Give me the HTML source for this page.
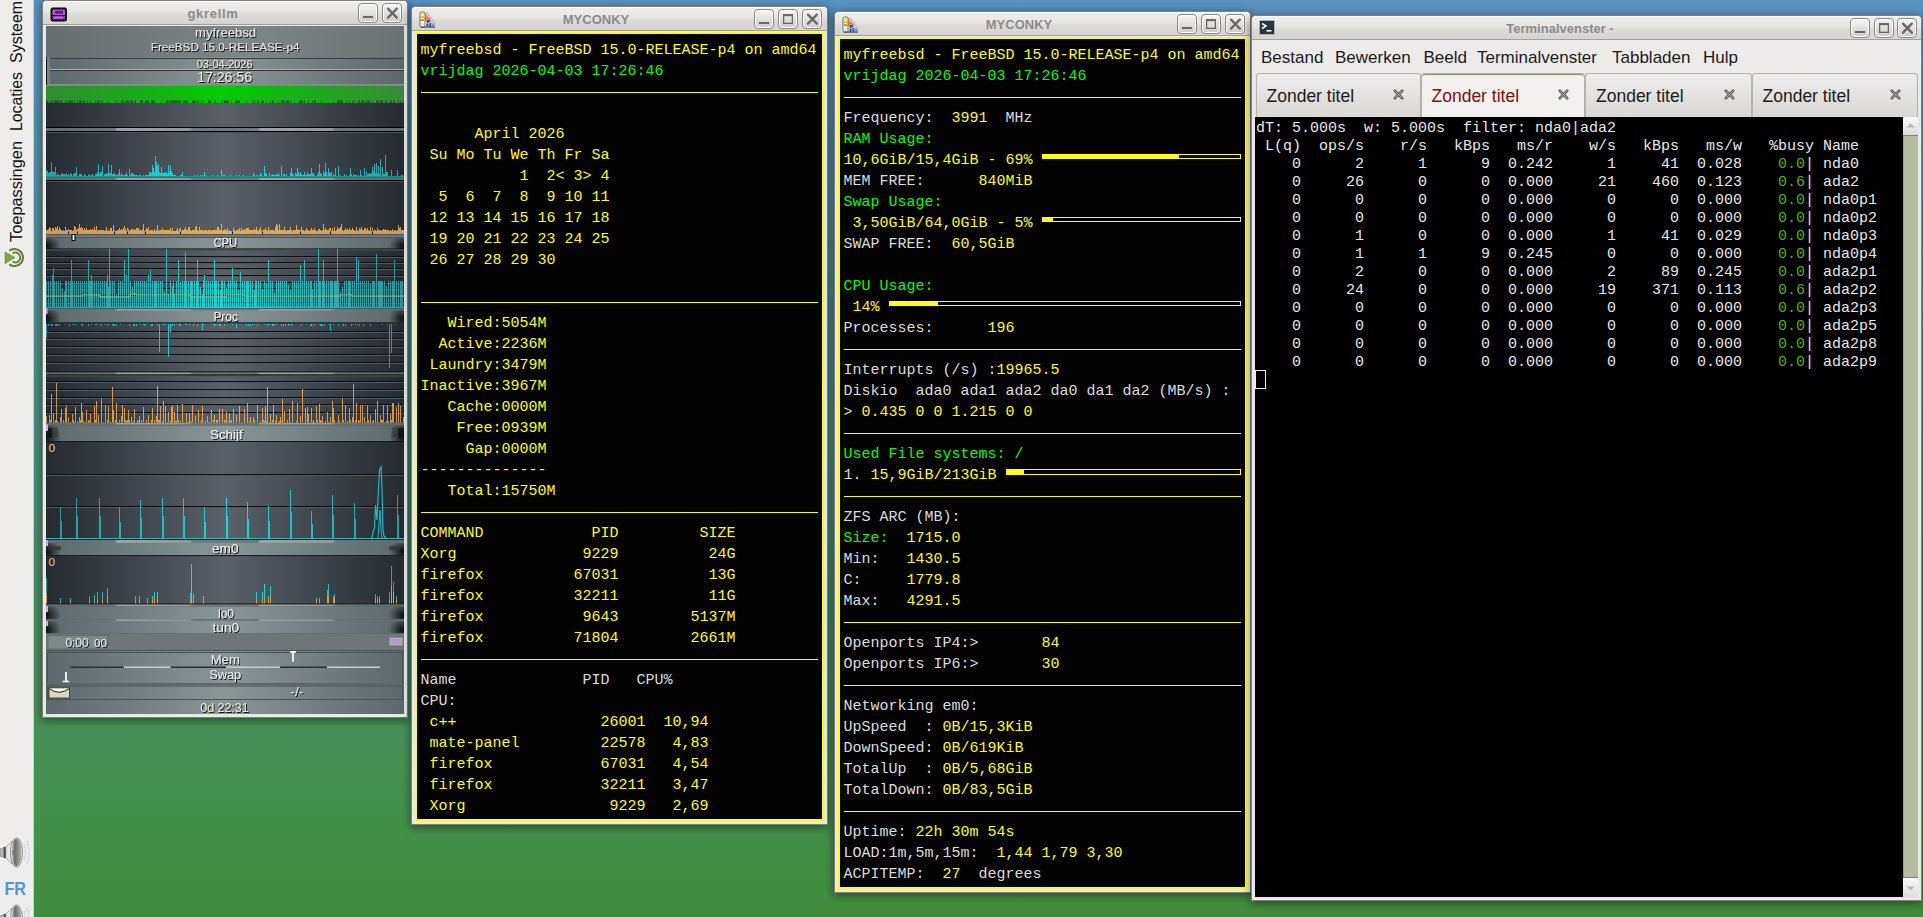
<!DOCTYPE html><html><head><meta charset="utf-8"><style>
*{box-sizing:border-box}
html,body{margin:0;padding:0}
body{width:1923px;height:917px;position:relative;overflow:hidden;
 background:linear-gradient(180deg,rgb(90,145,192) 0px,rgb(78,142,165) 150px,rgb(72,140,128) 390px,rgb(69,141,100) 590px,rgb(70,143,86) 730px,rgb(67,144,75) 810px,rgb(65,140,60) 917px);
 font-family:"Liberation Sans",sans-serif}
.abs{position:absolute}
#panel{position:absolute;left:0;top:0;width:34px;height:917px;background:#eeedeb;border-right:1px solid #d6cfcf}
.win{position:absolute;background:#ebe9e6;border:1px solid #827e7a;border-radius:5px 5px 0 0;box-shadow:0 2px 9px 1px rgba(0,0,0,.42)}
.tb{position:absolute;left:0;top:0;right:0;height:24px;background:linear-gradient(#efeeec 0%,#e7e5e2 48%,#dddbd7 56%,#d6d4d0 100%);border-bottom:1px solid #a39f9b;border-radius:4px 4px 0 0;box-shadow:inset 0 1px 0 #fff}
.tt{position:absolute;left:0;right:0;top:5px;height:23px;line-height:23px;text-align:center;font:bold 13px "Liberation Sans",sans-serif;color:#8b8b8b}
.btn{position:absolute;top:2px;width:20px;height:20px;border:1px solid #8c8884;border-radius:4px;background:linear-gradient(#f7f6f5,#e2e0dc 50%,#cfccc7);box-shadow:inset 0 0 0 1px #fff}
.btn svg{position:absolute;left:0;top:0}
.mono{font-family:"Liberation Mono",monospace;white-space:pre}

.cl{font-size:15px;line-height:21px;height:21px}
.tl{font-size:15px;line-height:18px;height:18px;color:#e8e8e8}
.menu{font-size:17px;line-height:20px;color:#1a1a1a;white-space:pre}
.tab{background:linear-gradient(#eeedeb,#d9d7d3);border:1px solid #b5b2ad;border-bottom:none;border-radius:4px 4px 0 0}
.tab.act{background:#f2f1f0;border-color:#b5b2ad;box-shadow:inset 0 2px 1px -1px #7a8a5a}
.tabt{position:absolute;left:10px;font-size:17.5px;line-height:20px;color:#1a1a1a;white-space:pre}
.tab.act .tabt{color:#7a1010}
.tabx{position:absolute}
</style></head><body><div id="panel"><svg width="34" height="917" style="position:absolute;left:0;top:0" font-family="Liberation Sans"><text transform="translate(22.3,242) rotate(-90)" font-size="17" textLength="101" lengthAdjust="spacingAndGlyphs" fill="#101010">Toepassingen</text><text transform="translate(22.3,131) rotate(-90)" font-size="17" textLength="59" lengthAdjust="spacingAndGlyphs" fill="#101010">Locaties</text><text transform="translate(22.3,62.9) rotate(-90)" font-size="17" textLength="62" lengthAdjust="spacingAndGlyphs" fill="#101010">Systeem</text><path d="M5 251.9 L5 263.7 L15 257.6 Z" fill="#7aa84a" stroke="#5a7a38" stroke-width="0.5"/><path d="M9.3 250.6 A8.6 8.6 0 1 1 9.3 264.4" fill="none" stroke="#5d7f3a" stroke-width="2"/><path d="M12.6 253.4 A4.9 4.9 0 1 1 12.6 261.6" fill="none" stroke="#5d7f3a" stroke-width="1.8"/><g transform="translate(0,838)"><defs><linearGradient id="spk" x1="0" x2="1"><stop offset="0" stop-color="#e8e8e8"/><stop offset="0.35" stop-color="#6a6a6a"/><stop offset="1" stop-color="#b8b8b8"/></linearGradient></defs><path d="M0 11 L6 9 L6 20 L0 18 Z" fill="#b8b8b8" stroke="#777" stroke-width="0.6"/><rect x="3.5" y="9" width="3" height="11" fill="#555"/><path d="M6 9 L12 3 L12 26 L6 20 Z" fill="#e8e8e8" stroke="#888" stroke-width="0.6"/><ellipse cx="16.5" cy="14.5" rx="5.5" ry="14.2" fill="url(#spk)" stroke="#eee" stroke-width="0.9"/><ellipse cx="16.5" cy="14.5" rx="6" ry="14.7" fill="none" stroke="#555" stroke-width="0.6"/><ellipse cx="13.5" cy="14.5" rx="1.5" ry="2.5" fill="#777"/><path d="M24 6 Q27 14.5 24 23 M27 3 Q31 14.5 27 26" fill="none" stroke="#8ab8e8" stroke-width="0.8" stroke-dasharray="1.5 1"/></g><text x="4.5" y="894.5" font-size="19" font-weight="bold" textLength="21.5" lengthAdjust="spacingAndGlyphs" fill="#4a9ad8">FR</text><g transform="translate(0,905)"><defs><linearGradient id="spk" x1="0" x2="1"><stop offset="0" stop-color="#e8e8e8"/><stop offset="0.35" stop-color="#6a6a6a"/><stop offset="1" stop-color="#b8b8b8"/></linearGradient></defs><path d="M0 11 L6 9 L6 20 L0 18 Z" fill="#b8b8b8" stroke="#777" stroke-width="0.6"/><rect x="3.5" y="9" width="3" height="11" fill="#555"/><path d="M6 9 L12 3 L12 26 L6 20 Z" fill="#e8e8e8" stroke="#888" stroke-width="0.6"/><ellipse cx="16.5" cy="14.5" rx="5.5" ry="14.2" fill="url(#spk)" stroke="#eee" stroke-width="0.9"/><ellipse cx="16.5" cy="14.5" rx="6" ry="14.7" fill="none" stroke="#555" stroke-width="0.6"/><ellipse cx="13.5" cy="14.5" rx="1.5" ry="2.5" fill="#777"/><path d="M24 6 Q27 14.5 24 23 M27 3 Q31 14.5 27 26" fill="none" stroke="#8ab8e8" stroke-width="0.8" stroke-dasharray="1.5 1"/></g></svg></div><div class="win" style="left:42px;top:0px;width:366px;height:718px"><div class="tb"></div><div class="tt" style="left:26px;width:288px;right:auto;letter-spacing:0.7px;">gkrellm</div><svg class="abs" style="left:7px;top:6px" width="17" height="15" viewBox="0 0 17 15"><rect x="1" y="1" width="15.5" height="13" rx="1.5" fill="#1a0a20" stroke="#000" stroke-width="1"/><rect x="2.5" y="2.5" width="12.5" height="5.5" fill="#b060d0"/><rect x="5" y="3.8" width="8" height="3" fill="#6a1a8a"/><rect x="2.5" y="9" width="12.5" height="3.5" fill="#8a30b0"/><rect x="4" y="9.8" width="9" height="1.6" fill="#d8a0f0" opacity=".7"/></svg><div class="btn" style="left:315px;top:2px"><svg width="18" height="18"><rect x="4" y="12" width="10" height="2" fill="#686868"/></svg></div><div class="btn" style="left:339px;top:2px"><svg width="18" height="18"><path d="M5 4.6 L13.8 13.6 M13.8 4.6 L5 13.6" stroke="#686868" stroke-width="2.3" stroke-linecap="round"/></svg></div><div class="abs" style="left:3px;top:25px;width:358px;height:688px;background:#4a5258;overflow:hidden"><svg width="358" height="688" style="position:absolute;left:0;top:0" font-family="Liberation Sans"><defs><linearGradient id="cbg" x1="0" x2="1" y1="0" y2="0"><stop offset="0" stop-color="#252a31"/><stop offset="0.5" stop-color="#5a6168"/><stop offset="1" stop-color="#252a31"/></linearGradient><linearGradient id="pbg" x1="0" x2="1" y1="0" y2="0"><stop offset="0" stop-color="#5c686b"/><stop offset="0.5" stop-color="#8a9598"/><stop offset="1" stop-color="#5c686b"/></linearGradient><linearGradient id="hbg" x1="0" x2="1" y1="0" y2="0"><stop offset="0" stop-color="#666e70"/><stop offset="0.55" stop-color="#7e8688"/><stop offset="1" stop-color="#6a7274"/></linearGradient><linearGradient id="grn" x1="0" x2="1" y1="0" y2="0"><stop offset="0" stop-color="#348a34"/><stop offset="0.5" stop-color="#00cc00"/><stop offset="1" stop-color="#3a8a3a"/></linearGradient><linearGradient id="sep" x1="0" x2="1" y1="0" y2="0"><stop offset="0" stop-color="#5f6b6e"/><stop offset="0.19" stop-color="#6a7679"/><stop offset="0.2" stop-color="#9aa4a6"/><stop offset="0.4" stop-color="#8e9899"/><stop offset="0.41" stop-color="#6e7a7c"/><stop offset="0.59" stop-color="#6e7a7c"/><stop offset="0.6" stop-color="#9aa4a6"/><stop offset="0.8" stop-color="#8e9899"/><stop offset="0.81" stop-color="#6a7679"/><stop offset="1" stop-color="#5f6b6e"/></linearGradient><radialGradient id="blobL" cx="0" cy="0.7" r="1" gradientTransform="scale(0.25 1)"><stop offset="0" stop-color="#000" stop-opacity="0.9"/><stop offset="1" stop-color="#000" stop-opacity="0"/></radialGradient><radialGradient id="blobR" cx="1" cy="0.7" r="1" gradientTransform="translate(0.75 0) scale(0.25 1)"><stop offset="0" stop-color="#000" stop-opacity="0.9"/><stop offset="1" stop-color="#000" stop-opacity="0"/></radialGradient><linearGradient id="cyan" x1="0" x2="1" y1="0" y2="0"><stop offset="0" stop-color="#2aa0a4"/><stop offset="0.5" stop-color="#12e2e2"/><stop offset="1" stop-color="#2aa0a4"/></linearGradient><linearGradient id="org" x1="0" x2="1" y1="0" y2="0"><stop offset="0" stop-color="#d49a48"/><stop offset="0.5" stop-color="#f0a848"/><stop offset="1" stop-color="#d49a48"/></linearGradient><filter id="sh" x="-10%" y="-30%" width="130%" height="160%"><feDropShadow dx="1" dy="1" stdDeviation="0.3" flood-color="#000" flood-opacity="0.85"/></filter></defs><rect x="0" y="0" width="358" height="31" fill="url(#hbg)" /><text x="149" y="11.299999999999997" font-size="12.8" textLength="61" lengthAdjust="spacingAndGlyphs" fill="#e4e4e4" font-weight="normal" filter="url(#sh)">myfreebsd</text><text x="104.80000000000001" y="24.700000000000003" font-size="11.6" textLength="148.7" lengthAdjust="spacingAndGlyphs" fill="#e4e4e4" font-weight="normal" filter="url(#sh)">FreeBSD 15.0-RELEASE-p4</text><rect x="0" y="31" width="358" height="28" fill="url(#pbg)" /><rect x="0" y="31" width="1" height="28" fill="#101214" /><rect x="1" y="31" width="3" height="27" fill="#7a7f80" /><rect x="4" y="32" width="354" height="1" fill="#3a4042" /><rect x="4" y="43" width="354" height="1" fill="#a8aeb0" /><rect x="4" y="44" width="354" height="1" fill="#33393b" /><rect x="1" y="58" width="357" height="1" fill="#8a8c90" /><text x="150.7" y="41.5" font-size="11.3" textLength="55.80000000000001" lengthAdjust="spacingAndGlyphs" fill="#efe6cc" font-weight="normal" filter="url(#sh)">03-04-2026</text><text x="151.2" y="56.3" font-size="14.2" textLength="54.80000000000001" lengthAdjust="spacingAndGlyphs" fill="#efe6cc" font-weight="normal" filter="url(#sh)">17:26:56</text><rect x="0" y="59" width="358" height="18" fill="url(#grn)" /><rect x="0" y="59" width="358" height="1" fill="#2ec42e" opacity="0.85"/><path d="M0 74.5h1v2.5h-1zM1 74.5h1v2.5h-1zM3 74.5h1v2.5h-1zM5 74.5h1v2.5h-1zM6 74.5h1v2.5h-1zM8 74.5h1v2.5h-1zM9 74.5h1v2.5h-1zM10 74.5h1v2.5h-1zM11 74.5h1v2.5h-1zM12 74.5h1v2.5h-1zM14 74.5h1v2.5h-1zM15 74.5h1v2.5h-1zM19 74.5h1v2.5h-1zM21 74.5h1v2.5h-1zM23 74.5h1v2.5h-1zM24 74.5h1v2.5h-1zM25 74.5h1v2.5h-1zM26 74.5h1v2.5h-1zM28 74.5h1v2.5h-1zM31 74.5h1v2.5h-1zM33 74.5h1v2.5h-1zM34 74.5h1v2.5h-1zM35 74.5h1v2.5h-1zM37 74.5h1v2.5h-1zM38 74.5h1v2.5h-1zM41 74.5h1v2.5h-1zM44 74.5h1v2.5h-1zM49 74.5h1v2.5h-1zM51 74.5h1v2.5h-1zM52 74.5h1v2.5h-1zM54 74.5h1v2.5h-1zM56 74.5h1v2.5h-1zM61 74.5h1v2.5h-1zM70 74.5h1v2.5h-1zM75 74.5h1v2.5h-1zM76 74.5h1v2.5h-1zM78 74.5h1v2.5h-1zM80 74.5h1v2.5h-1zM81 74.5h1v2.5h-1zM82 74.5h1v2.5h-1zM84 74.5h1v2.5h-1zM85 74.5h1v2.5h-1zM86 74.5h1v2.5h-1zM88 74.5h1v2.5h-1zM89 74.5h1v2.5h-1zM94 74.5h1v2.5h-1zM95 74.5h1v2.5h-1zM96 74.5h1v2.5h-1zM99 74.5h1v2.5h-1zM100 74.5h1v2.5h-1zM101 74.5h1v2.5h-1zM102 74.5h1v2.5h-1zM105 74.5h1v2.5h-1zM106 74.5h1v2.5h-1zM107 74.5h1v2.5h-1zM108 74.5h1v2.5h-1zM115 74.5h1v2.5h-1zM120 74.5h1v2.5h-1zM121 74.5h1v2.5h-1zM122 74.5h1v2.5h-1zM124 74.5h1v2.5h-1zM125 74.5h1v2.5h-1zM126 74.5h1v2.5h-1zM127 74.5h1v2.5h-1zM128 74.5h1v2.5h-1zM129 74.5h1v2.5h-1zM130 74.5h1v2.5h-1zM131 74.5h1v2.5h-1zM132 74.5h1v2.5h-1zM133 74.5h1v2.5h-1zM134 74.5h1v2.5h-1zM137 74.5h1v2.5h-1zM138 74.5h1v2.5h-1zM139 74.5h1v2.5h-1zM140 74.5h1v2.5h-1zM141 74.5h1v2.5h-1zM146 74.5h1v2.5h-1zM147 74.5h1v2.5h-1zM148 74.5h1v2.5h-1zM149 74.5h1v2.5h-1zM151 74.5h1v2.5h-1zM152 74.5h1v2.5h-1zM155 74.5h1v2.5h-1zM157 74.5h1v2.5h-1zM162 74.5h1v2.5h-1zM163 74.5h1v2.5h-1zM164 74.5h1v2.5h-1zM168 74.5h1v2.5h-1zM169 74.5h1v2.5h-1zM176 74.5h1v2.5h-1zM178 74.5h1v2.5h-1zM179 74.5h1v2.5h-1zM180 74.5h1v2.5h-1zM181 74.5h1v2.5h-1zM182 74.5h1v2.5h-1zM185 74.5h1v2.5h-1zM189 74.5h1v2.5h-1zM190 74.5h1v2.5h-1zM191 74.5h1v2.5h-1zM192 74.5h1v2.5h-1zM193 74.5h1v2.5h-1zM200 74.5h1v2.5h-1zM206 74.5h1v2.5h-1zM208 74.5h1v2.5h-1zM211 74.5h1v2.5h-1zM212 74.5h1v2.5h-1zM215 74.5h1v2.5h-1zM216 74.5h1v2.5h-1zM217 74.5h1v2.5h-1zM220 74.5h1v2.5h-1zM224 74.5h1v2.5h-1zM226 74.5h1v2.5h-1zM227 74.5h1v2.5h-1zM232 74.5h1v2.5h-1zM235 74.5h1v2.5h-1zM236 74.5h1v2.5h-1zM237 74.5h1v2.5h-1zM238 74.5h1v2.5h-1zM240 74.5h1v2.5h-1zM241 74.5h1v2.5h-1zM242 74.5h1v2.5h-1zM244 74.5h1v2.5h-1zM248 74.5h1v2.5h-1zM253 74.5h1v2.5h-1zM254 74.5h1v2.5h-1zM255 74.5h1v2.5h-1zM256 74.5h1v2.5h-1zM258 74.5h1v2.5h-1zM262 74.5h1v2.5h-1zM266 74.5h1v2.5h-1zM268 74.5h1v2.5h-1zM269 74.5h1v2.5h-1zM275 74.5h1v2.5h-1zM287 74.5h1v2.5h-1zM291 74.5h1v2.5h-1zM292 74.5h1v2.5h-1zM293 74.5h1v2.5h-1zM294 74.5h1v2.5h-1zM295 74.5h1v2.5h-1zM296 74.5h1v2.5h-1zM300 74.5h1v2.5h-1zM303 74.5h1v2.5h-1zM306 74.5h1v2.5h-1zM308 74.5h1v2.5h-1zM312 74.5h1v2.5h-1zM313 74.5h1v2.5h-1zM315 74.5h1v2.5h-1zM316 74.5h1v2.5h-1zM317 74.5h1v2.5h-1zM319 74.5h1v2.5h-1zM321 74.5h1v2.5h-1zM322 74.5h1v2.5h-1zM323 74.5h1v2.5h-1zM326 74.5h1v2.5h-1zM330 74.5h1v2.5h-1zM331 74.5h1v2.5h-1zM332 74.5h1v2.5h-1zM334 74.5h1v2.5h-1zM335 74.5h1v2.5h-1zM336 74.5h1v2.5h-1zM339 74.5h1v2.5h-1zM340 74.5h1v2.5h-1zM344 74.5h1v2.5h-1zM345 74.5h1v2.5h-1zM347 74.5h1v2.5h-1zM348 74.5h1v2.5h-1zM352 74.5h1v2.5h-1zM354 74.5h1v2.5h-1zM357 74.5h1v2.5h-1z" fill="#2a3a30" opacity="0.7"/><rect x="0" y="77" width="358" height="24" fill="url(#cbg)" /><rect x="0" y="101" width="358" height="1" fill="#000" /><rect x="0" y="102" width="358" height="3" fill="url(#sep)" /><rect x="0" y="105" width="358" height="1" fill="#000" /><rect x="0" y="106" width="358" height="1" fill="#46515b" /><rect x="0" y="107" width="358" height="44" fill="url(#cbg)" /><path d="M0 151v-7h1v7zM1 151v-6h1v6zM2 151v-4h1v4zM3 151v-5h1v5zM4 151v-5h1v5zM5 151v-15h1v15zM6 151v-6h1v6zM7 151v-5h1v5zM8 151v-5h1v5zM9 151v-10h1v10zM10 151v-2h1v2zM11 151v-4h1v4zM12 151v-2h1v2zM13 151v-2h1v2zM14 151v-2h1v2zM15 151v-4h1v4zM16 151v-3h1v3zM17 151v-3h1v3zM18 151v-3h1v3zM19 151v-2h1v2zM20 151v-4h1v4zM21 151v-2h1v2zM22 151v-3h1v3zM24 151v-4h1v4zM25 151v-3h1v3zM27 151v-3h1v3zM28 151v-4h1v4zM29 151v-4h1v4zM30 151v-10h1v10zM32 151v-1h1v1zM33 151v-3h1v3zM34 151v-3h1v3zM35 151v-3h1v3zM37 151v-1h1v1zM38 151v-3h1v3zM39 151v-2h1v2zM42 151v-2h1v2zM43 151v-3h1v3zM45 151v-2h1v2zM46 151v-3h1v3zM47 151v-1h1v1zM49 151v-3h1v3zM50 151v-3h1v3zM51 151v-5h1v5zM52 151v-13h1v13zM53 151v-3h1v3zM54 151v-5h1v5zM55 151v-5h1v5zM56 151v-11h1v11zM57 151v-1h1v1zM58 151v-3h1v3zM59 151v-3h1v3zM60 151v-4h1v4zM61 151v-3h1v3zM62 151v-13h1v13zM63 151v-4h1v4zM64 151v-4h1v4zM65 151v-12h1v12zM66 151v-3h1v3zM67 151v-3h1v3zM68 151v-4h1v4zM69 151v-2h1v2zM70 151v-2h1v2zM71 151v-2h1v2zM72 151v-4h1v4zM73 151v-8h1v8zM74 151v-2h1v2zM75 151v-4h1v4zM76 151v-2h1v2zM77 151v-2h1v2zM78 151v-2h1v2zM79 151v-3h1v3zM80 151v-4h1v4zM81 151v-2h1v2zM82 151v-1h1v1zM83 151v-8h1v8zM84 151v-2h1v2zM85 151v-4h1v4zM86 151v-4h1v4zM87 151v-3h1v3zM88 151v-2h1v2zM89 151v-2h1v2zM90 151v-2h1v2zM91 151v-2h1v2zM92 151v-1h1v1zM93 151v-2h1v2zM94 151v-2h1v2zM97 151v-2h1v2zM98 151v-1h1v1zM99 151v-2h1v2zM100 151v-2h1v2zM101 151v-2h1v2zM102 151v-2h1v2zM103 151v-5h1v5zM104 151v-5h1v5zM105 151v-4h1v4zM106 151v-12h1v12zM107 151v-9h1v9zM108 151v-5h1v5zM109 151v-21h1v21zM110 151v-15h1v15zM111 151v-11h1v11zM112 151v-13h1v13zM113 151v-5h1v5zM114 151v-4h1v4zM115 151v-10h1v10zM116 151v-4h1v4zM117 151v-4h1v4zM118 151v-5h1v5zM119 151v-4h1v4zM120 151v-5h1v5zM121 151v-3h1v3zM122 151v-12h1v12zM123 151v-5h1v5zM124 151v-12h1v12zM125 151v-6h1v6zM126 151v-4h1v4zM127 151v-2h1v2zM128 151v-2h1v2zM129 151v-2h1v2zM132 151v-1h1v1zM133 151v-1h1v1zM134 151v-2h1v2zM135 151v-2h1v2zM136 151v-5h1v5zM137 151v-1h1v1zM141 151v-1h1v1zM142 151v-1h1v1zM143 151v-1h1v1zM148 151v-2h1v2zM150 151v-1h1v1zM151 151v-2h1v2zM152 151v-1h1v1zM154 151v-2h1v2zM156 151v-2h1v2zM158 151v-5h1v5zM159 151v-2h1v2zM160 151v-1h1v1zM162 151v-1h1v1zM163 151v-1h1v1zM165 151v-1h1v1zM166 151v-2h1v2zM167 151v-1h1v1zM171 151v-2h1v2zM175 151v-7h1v7zM176 151v-1h1v1zM177 151v-2h1v2zM178 151v-2h1v2zM180 151v-1h1v1zM182 151v-1h1v1zM184 151v-2h1v2zM185 151v-1h1v1zM186 151v-1h1v1zM190 151v-2h1v2zM192 151v-1h1v1zM193 151v-2h1v2zM194 151v-1h1v1zM195 151v-1h1v1zM197 151v-2h1v2zM198 151v-1h1v1zM200 151v-1h1v1zM202 151v-1h1v1zM203 151v-1h1v1zM207 151v-4h1v4zM208 151v-2h1v2zM209 151v-1h1v1zM210 151v-2h1v2zM211 151v-1h1v1zM212 151v-2h1v2zM214 151v-4h1v4zM215 151v-3h1v3zM216 151v-1h1v1zM217 151v-1h1v1zM218 151v-11h1v11zM219 151v-4h1v4zM220 151v-3h1v3zM222 151v-1h1v1zM223 151v-4h1v4zM224 151v-1h1v1zM225 151v-2h1v2zM226 151v-3h1v3zM227 151v-2h1v2zM228 151v-2h1v2zM229 151v-2h1v2zM230 151v-3h1v3zM231 151v-2h1v2zM232 151v-4h1v4zM233 151v-2h1v2zM234 151v-1h1v1zM235 151v-11h1v11zM236 151v-1h1v1zM237 151v-3h1v3zM238 151v-3h1v3zM239 151v-1h1v1zM240 151v-3h1v3zM241 151v-1h1v1zM244 151v-4h1v4zM245 151v-9h1v9zM246 151v-4h1v4zM247 151v-2h1v2zM248 151v-1h1v1zM249 151v-4h1v4zM250 151v-3h1v3zM251 151v-9h1v9zM252 151v-5h1v5zM253 151v-2h1v2zM254 151v-5h1v5zM255 151v-3h1v3zM256 151v-2h1v2zM257 151v-2h1v2zM258 151v-5h1v5zM259 151v-2h1v2zM260 151v-2h1v2zM261 151v-5h1v5zM262 151v-3h1v3zM263 151v-3h1v3zM264 151v-3h1v3zM265 151v-9h1v9zM266 151v-4h1v4zM267 151v-4h1v4zM268 151v-2h1v2zM269 151v-1h1v1zM270 151v-1h1v1zM271 151v-3h1v3zM272 151v-5h1v5zM273 151v-13h1v13zM274 151v-4h1v4zM275 151v-3h1v3zM276 151v-1h1v1zM277 151v-6h1v6zM278 151v-4h1v4zM279 151v-14h1v14zM280 151v-5h1v5zM281 151v-1h1v1zM282 151v-9h1v9zM283 151v-5h1v5zM284 151v-4h1v4zM285 151v-5h1v5zM286 151v-1h1v1zM287 151v-3h1v3zM288 151v-2h1v2zM289 151v-9h1v9zM290 151v-1h1v1zM292 151v-11h1v11zM293 151v-1h1v1zM294 151v-2h1v2zM297 151v-1h1v1zM298 151v-3h1v3zM300 151v-2h1v2zM301 151v-1h1v1zM302 151v-1h1v1zM303 151v-2h1v2zM304 151v-9h1v9zM305 151v-3h1v3zM306 151v-1h1v1zM307 151v-3h1v3zM308 151v-2h1v2zM309 151v-2h1v2zM310 151v-2h1v2zM311 151v-1h1v1zM312 151v-2h1v2zM314 151v-7h1v7zM315 151v-2h1v2zM317 151v-1h1v1zM318 151v-9h1v9zM320 151v-5h1v5zM321 151v-2h1v2zM322 151v-3h1v3zM323 151v-4h1v4zM324 151v-3h1v3zM325 151v-4h1v4zM326 151v-10h1v10zM327 151v-6h1v6zM328 151v-13h1v13zM329 151v-4h1v4zM330 151v-14h1v14zM331 151v-4h1v4zM332 151v-11h1v11zM333 151v-3h1v3zM334 151v-18h1v18zM335 151v-1h1v1zM336 151v-10h1v10zM337 151v-3h1v3zM338 151v-3h1v3zM339 151v-22h1v22zM340 151v-5h1v5zM341 151v-5h1v5zM342 151v-1h1v1zM343 151v-1h1v1zM345 151v-7h1v7zM346 151v-1h1v1zM347 151v-1h1v1zM348 151v-1h1v1zM349 151v-1h1v1zM351 151v-7h1v7zM352 151v-1h1v1zM355 151v-2h1v2zM356 151v-2h1v2z" fill="url(#cyan)" opacity="1" shape-rendering="crispEdges"/><rect x="0" y="150" width="358" height="1" fill="#00a0a0" /><rect x="0" y="151" width="358" height="1" fill="#5a5a6a" /><rect x="0" y="152" width="358" height="2" fill="url(#sep)" /><rect x="0" y="154" width="358" height="1" fill="#000" /><rect x="0" y="155" width="358" height="1" fill="#46515b" /><rect x="0" y="156" width="358" height="52" fill="url(#cbg)" /><path d="M0 208v-4h1v4zM1 208v-4h1v4zM2 208v-5h1v5zM3 208v-7h1v7zM4 208v-6h1v6zM5 208v-3h1v3zM6 208v-6h1v6zM7 208v-6h1v6zM8 208v-4h1v4zM9 208v-7h1v7zM10 208v-6h1v6zM11 208v-8h1v8zM12 208v-4h1v4zM13 208v-7h1v7zM14 208v-5h1v5zM15 208v-4h1v4zM16 208v-3h1v3zM17 208v-4h1v4zM18 208v-3h1v3zM19 208v-7h1v7zM20 208v-4h1v4zM21 208v-4h1v4zM22 208v-5h1v5zM23 208v-4h1v4zM24 208v-4h1v4zM25 208v-4h1v4zM26 208v-3h1v3zM27 208v-4h1v4zM28 208v-8h1v8zM29 208v-7h1v7zM30 208v-4h1v4zM31 208v-5h1v5zM32 208v-6h1v6zM33 208v-10h1v10zM34 208v-6h1v6zM35 208v-7h1v7zM36 208v-6h1v6zM37 208v-4h1v4zM38 208v-6h1v6zM39 208v-4h1v4zM40 208v-6h1v6zM41 208v-4h1v4zM42 208v-4h1v4zM43 208v-4h1v4zM44 208v-5h1v5zM45 208v-4h1v4zM46 208v-5h1v5zM47 208v-4h1v4zM48 208v-7h1v7zM49 208v-4h1v4zM50 208v-8h1v8zM51 208v-3h1v3zM52 208v-4h1v4zM53 208v-4h1v4zM54 208v-4h1v4zM55 208v-4h1v4zM56 208v-4h1v4zM57 208v-4h1v4zM58 208v-3h1v3zM59 208v-4h1v4zM60 208v-7h1v7zM61 208v-3h1v3zM62 208v-4h1v4zM63 208v-3h1v3zM64 208v-6h1v6zM65 208v-6h1v6zM66 208v-3h1v3zM67 208v-9h1v9zM68 208v-4h1v4zM69 208v-3h1v3zM70 208v-3h1v3zM71 208v-4h1v4zM72 208v-4h1v4zM73 208v-6h1v6zM74 208v-4h1v4zM75 208v-5h1v5zM76 208v-4h1v4zM77 208v-6h1v6zM78 208v-8h1v8zM79 208v-5h1v5zM80 208v-3h1v3zM81 208v-6h1v6zM82 208v-5h1v5zM83 208v-3h1v3zM84 208v-4h1v4zM85 208v-5h1v5zM86 208v-5h1v5zM87 208v-4h1v4zM88 208v-5h1v5zM89 208v-4h1v4zM90 208v-6h1v6zM91 208v-6h1v6zM92 208v-6h1v6zM93 208v-4h1v4zM94 208v-4h1v4zM95 208v-3h1v3zM96 208v-5h1v5zM97 208v-10h1v10zM98 208v-3h1v3zM99 208v-4h1v4zM100 208v-6h1v6zM101 208v-5h1v5zM102 208v-7h1v7zM103 208v-3h1v3zM104 208v-4h1v4zM105 208v-4h1v4zM106 208v-4h1v4zM107 208v-3h1v3zM108 208v-5h1v5zM109 208v-3h1v3zM110 208v-4h1v4zM111 208v-9h1v9zM112 208v-3h1v3zM113 208v-4h1v4zM114 208v-4h1v4zM115 208v-4h1v4zM116 208v-6h1v6zM117 208v-4h1v4zM118 208v-4h1v4zM119 208v-4h1v4zM120 208v-4h1v4zM121 208v-4h1v4zM122 208v-4h1v4zM123 208v-4h1v4zM124 208v-6h1v6zM125 208v-3h1v3zM126 208v-6h1v6zM127 208v-3h1v3zM128 208v-3h1v3zM129 208v-3h1v3zM130 208v-4h1v4zM131 208v-6h1v6zM132 208v-3h1v3zM133 208v-5h1v5zM134 208v-6h1v6zM135 208v-3h1v3zM136 208v-4h1v4zM137 208v-4h1v4zM138 208v-5h1v5zM139 208v-7h1v7zM140 208v-4h1v4zM141 208v-4h1v4zM142 208v-7h1v7zM143 208v-7h1v7zM144 208v-4h1v4zM145 208v-3h1v3zM146 208v-4h1v4zM147 208v-4h1v4zM148 208v-4h1v4zM149 208v-7h1v7zM150 208v-8h1v8zM151 208v-4h1v4zM152 208v-3h1v3zM153 208v-7h1v7zM154 208v-4h1v4zM155 208v-4h1v4zM156 208v-4h1v4zM157 208v-3h1v3zM158 208v-4h1v4zM159 208v-4h1v4zM160 208v-4h1v4zM161 208v-3h1v3zM162 208v-4h1v4zM163 208v-4h1v4zM164 208v-4h1v4zM165 208v-3h1v3zM166 208v-4h1v4zM167 208v-4h1v4zM168 208v-4h1v4zM169 208v-4h1v4zM170 208v-4h1v4zM171 208v-7h1v7zM172 208v-7h1v7zM173 208v-4h1v4zM174 208v-4h1v4zM175 208v-10h1v10zM176 208v-3h1v3zM177 208v-4h1v4zM178 208v-5h1v5zM179 208v-4h1v4zM180 208v-4h1v4zM181 208v-6h1v6zM182 208v-3h1v3zM183 208v-4h1v4zM184 208v-3h1v3zM185 208v-3h1v3zM186 208v-3h1v3zM187 208v-6h1v6zM188 208v-4h1v4zM189 208v-3h1v3zM190 208v-4h1v4zM191 208v-4h1v4zM192 208v-4h1v4zM193 208v-6h1v6zM194 208v-3h1v3zM195 208v-6h1v6zM196 208v-4h1v4zM197 208v-4h1v4zM198 208v-5h1v5zM199 208v-4h1v4zM200 208v-6h1v6zM201 208v-6h1v6zM202 208v-6h1v6zM203 208v-4h1v4zM204 208v-4h1v4zM205 208v-4h1v4zM206 208v-4h1v4zM207 208v-4h1v4zM208 208v-5h1v5zM209 208v-4h1v4zM210 208v-7h1v7zM211 208v-4h1v4zM212 208v-3h1v3zM213 208v-5h1v5zM214 208v-7h1v7zM215 208v-3h1v3zM216 208v-4h1v4zM217 208v-4h1v4zM218 208v-4h1v4zM219 208v-6h1v6zM220 208v-4h1v4zM221 208v-3h1v3zM222 208v-7h1v7zM223 208v-4h1v4zM224 208v-4h1v4zM225 208v-4h1v4zM226 208v-4h1v4zM227 208v-4h1v4zM228 208v-3h1v3zM229 208v-7h1v7zM230 208v-10h1v10zM231 208v-9h1v9zM232 208v-4h1v4zM233 208v-10h1v10zM234 208v-4h1v4zM235 208v-4h1v4zM236 208v-4h1v4zM237 208v-4h1v4zM238 208v-7h1v7zM239 208v-4h1v4zM240 208v-3h1v3zM241 208v-4h1v4zM242 208v-4h1v4zM243 208v-4h1v4zM244 208v-7h1v7zM245 208v-4h1v4zM246 208v-3h1v3zM247 208v-4h1v4zM248 208v-4h1v4zM249 208v-4h1v4zM250 208v-9h1v9zM251 208v-5h1v5zM252 208v-4h1v4zM253 208v-4h1v4zM254 208v-4h1v4zM255 208v-7h1v7zM256 208v-4h1v4zM257 208v-4h1v4zM258 208v-3h1v3zM259 208v-4h1v4zM260 208v-6h1v6zM261 208v-4h1v4zM262 208v-4h1v4zM263 208v-3h1v3zM264 208v-4h1v4zM265 208v-6h1v6zM266 208v-4h1v4zM267 208v-4h1v4zM268 208v-6h1v6zM269 208v-4h1v4zM270 208v-3h1v3zM271 208v-3h1v3zM272 208v-5h1v5zM273 208v-5h1v5zM274 208v-4h1v4zM275 208v-3h1v3zM276 208v-4h1v4zM277 208v-10h1v10zM278 208v-4h1v4zM279 208v-6h1v6zM280 208v-4h1v4zM281 208v-4h1v4zM282 208v-4h1v4zM283 208v-6h1v6zM284 208v-6h1v6zM285 208v-3h1v3zM286 208v-6h1v6zM287 208v-3h1v3zM288 208v-7h1v7zM289 208v-3h1v3zM290 208v-4h1v4zM291 208v-7h1v7zM292 208v-5h1v5zM293 208v-6h1v6zM294 208v-7h1v7zM295 208v-10h1v10zM296 208v-4h1v4zM297 208v-3h1v3zM298 208v-4h1v4zM299 208v-6h1v6zM300 208v-4h1v4zM301 208v-5h1v5zM302 208v-4h1v4zM303 208v-6h1v6zM304 208v-4h1v4zM305 208v-4h1v4zM306 208v-6h1v6zM307 208v-4h1v4zM308 208v-4h1v4zM309 208v-3h1v3zM310 208v-7h1v7zM311 208v-4h1v4zM312 208v-3h1v3zM313 208v-6h1v6zM314 208v-5h1v5zM315 208v-7h1v7zM316 208v-4h1v4zM317 208v-4h1v4zM318 208v-6h1v6zM319 208v-6h1v6zM320 208v-4h1v4zM321 208v-6h1v6zM322 208v-4h1v4zM323 208v-3h1v3zM324 208v-7h1v7zM325 208v-3h1v3zM326 208v-6h1v6zM327 208v-3h1v3zM328 208v-4h1v4zM329 208v-4h1v4zM330 208v-3h1v3zM331 208v-6h1v6zM332 208v-4h1v4zM333 208v-4h1v4zM334 208v-4h1v4zM335 208v-3h1v3zM336 208v-4h1v4zM337 208v-5h1v5zM338 208v-4h1v4zM339 208v-5h1v5zM340 208v-4h1v4zM341 208v-4h1v4zM342 208v-4h1v4zM343 208v-3h1v3zM344 208v-4h1v4zM345 208v-3h1v3zM346 208v-5h1v5zM347 208v-3h1v3zM348 208v-4h1v4zM349 208v-4h1v4zM350 208v-3h1v3zM351 208v-4h1v4zM352 208v-9h1v9zM353 208v-6h1v6zM354 208v-7h1v7zM355 208v-4h1v4zM356 208v-4h1v4zM357 208v-4h1v4z" fill="url(#org)" opacity="1" shape-rendering="crispEdges"/><rect x="0" y="206" width="358" height="2" fill="url(#org)" /><rect x="22" y="205.5" width="1" height="2.5" fill="#151a20" /><rect x="31" y="205.5" width="1" height="2.5" fill="#151a20" /><rect x="68" y="205.5" width="1" height="2.5" fill="#151a20" /><rect x="81" y="205.5" width="1" height="2.5" fill="#151a20" /><rect x="99" y="205.5" width="1" height="2.5" fill="#151a20" /><rect x="134" y="205.5" width="1" height="2.5" fill="#151a20" /><rect x="186" y="205.5" width="1" height="2.5" fill="#151a20" /><rect x="216" y="205.5" width="1" height="2.5" fill="#151a20" /><rect x="254" y="205.5" width="1" height="2.5" fill="#151a20" /><rect x="284" y="205.5" width="1" height="2.5" fill="#151a20" /><rect x="326" y="205.5" width="1" height="2.5" fill="#151a20" /><rect x="0" y="208" width="358" height="1" fill="#4b5866" /><rect x="0" y="209" width="358" height="2" fill="#6c7779" /><rect x="0" y="211" width="358" height="1" fill="#4f585a" /><rect x="0" y="212" width="358" height="11" fill="url(#pbg)" /><rect x="0" y="212" width="60" height="11" fill="url(#blobL)"/><rect x="298" y="212" width="60" height="11" fill="url(#blobR)"/><rect x="0" y="222.5" width="358" height="1.0" fill="#050505" /><rect x="0" y="223.5" width="358" height="1.0" fill="#4a5662" /><rect x="26" y="208.5" width="3" height="6" fill="#bff" stroke="#000" stroke-width="1"/><text x="167.4" y="221.2" font-size="12.8" textLength="23.69999999999999" lengthAdjust="spacingAndGlyphs" fill="#f0f0f0" font-weight="normal" filter="url(#sh)">CPU</text><rect x="0" y="224.5" width="358" height="57.5" fill="url(#cbg)" /><rect x="0" y="230" width="358" height="1" fill="#0c0e10" shape-rendering="crispEdges"/><rect x="0" y="231" width="358" height="1" fill="#4e5964" shape-rendering="crispEdges"/><rect x="0" y="236" width="358" height="1" fill="#0c0e10" shape-rendering="crispEdges"/><rect x="0" y="237" width="358" height="1" fill="#4e5964" shape-rendering="crispEdges"/><rect x="0" y="242" width="358" height="1" fill="#0c0e10" shape-rendering="crispEdges"/><rect x="0" y="243" width="358" height="1" fill="#4e5964" shape-rendering="crispEdges"/><rect x="0" y="249" width="358" height="1" fill="#0c0e10" shape-rendering="crispEdges"/><rect x="0" y="250" width="358" height="1" fill="#4e5964" shape-rendering="crispEdges"/><rect x="0" y="256" width="358" height="1" fill="#0c0e10" shape-rendering="crispEdges"/><rect x="0" y="257" width="358" height="1" fill="#4e5964" shape-rendering="crispEdges"/><rect x="0" y="262" width="358" height="1" fill="#0c0e10" shape-rendering="crispEdges"/><rect x="0" y="263" width="358" height="1" fill="#4e5964" shape-rendering="crispEdges"/><rect x="0" y="269" width="358" height="1" fill="#0c0e10" shape-rendering="crispEdges"/><rect x="0" y="270" width="358" height="1" fill="#4e5964" shape-rendering="crispEdges"/><rect x="0" y="276" width="358" height="1" fill="#0c0e10" shape-rendering="crispEdges"/><rect x="0" y="277" width="358" height="1" fill="#4e5964" shape-rendering="crispEdges"/><path d="M0 282v-27h1v27zM2 282v-27h1v27zM4 282v-27h1v27zM6 282v-33h1v33zM7 282v-40h1v40zM8 282v-27h1v27zM10 282v-27h1v27zM12 282v-27h1v27zM14 282v-27h1v27zM16 282v-20h1v20zM18 282v-17h1v17zM19 282v-27h1v27zM20 282v-27h1v27zM22 282v-27h1v27zM24 282v-27h1v27zM25 282v-48h1v48zM26 282v-27h1v27zM28 282v-27h1v27zM30 282v-27h1v27zM32 282v-27h1v27zM34 282v-27h1v27zM36 282v-27h1v27zM38 282v-27h1v27zM40 282v-27h1v27zM42 282v-48h1v48zM43 282v-27h1v27zM44 282v-27h1v27zM45 282v-33h1v33zM46 282v-27h1v27zM48 282v-27h1v27zM50 282v-27h1v27zM52 282v-27h1v27zM54 282v-27h1v27zM56 282v-27h1v27zM58 282v-27h1v27zM60 282v-27h1v27zM61 282v-33h1v33zM62 282v-21h1v21zM63 282v-59h1v59zM64 282v-27h1v27zM66 282v-27h1v27zM68 282v-27h1v27zM70 282v-14h1v14zM72 282v-27h1v27zM74 282v-27h1v27zM76 282v-27h1v27zM78 282v-48h1v48zM80 282v-33h1v33zM82 282v-59h1v59zM84 282v-27h1v27zM86 282v-21h1v21zM88 282v-27h1v27zM90 282v-27h1v27zM92 282v-27h1v27zM94 282v-27h1v27zM96 282v-27h1v27zM98 282v-27h1v27zM100 282v-27h1v27zM102 282v-33h1v33zM104 282v-38h1v38zM106 282v-27h1v27zM108 282v-27h1v27zM109 282v-27h1v27zM110 282v-27h1v27zM112 282v-27h1v27zM114 282v-27h1v27zM116 282v-27h1v27zM118 282v-16h1v16zM120 282v-59h1v59zM122 282v-14h1v14zM124 282v-27h1v27zM126 282v-22h1v22zM127 282v-27h1v27zM128 282v-14h1v14zM130 282v-27h1v27zM132 282v-48h1v48zM134 282v-26h1v26zM136 282v-27h1v27zM138 282v-27h1v27zM139 282v-56h1v56zM140 282v-27h1v27zM142 282v-27h1v27zM144 282v-27h1v27zM145 282v-27h1v27zM146 282v-27h1v27zM148 282v-27h1v27zM150 282v-27h1v27zM151 282v-48h1v48zM152 282v-27h1v27zM154 282v-21h1v21zM156 282v-14h1v14zM157 282v-27h1v27zM158 282v-33h1v33zM160 282v-27h1v27zM162 282v-27h1v27zM164 282v-27h1v27zM166 282v-27h1v27zM168 282v-48h1v48zM169 282v-27h1v27zM170 282v-27h1v27zM172 282v-27h1v27zM174 282v-18h1v18zM175 282v-27h1v27zM176 282v-27h1v27zM178 282v-27h1v27zM180 282v-20h1v20zM182 282v-27h1v27zM184 282v-27h1v27zM186 282v-40h1v40zM188 282v-27h1v27zM190 282v-27h1v27zM192 282v-18h1v18zM194 282v-36h1v36zM196 282v-27h1v27zM198 282v-27h1v27zM200 282v-27h1v27zM201 282v-27h1v27zM202 282v-27h1v27zM204 282v-27h1v27zM206 282v-27h1v27zM208 282v-18h1v18zM209 282v-27h1v27zM210 282v-27h1v27zM212 282v-27h1v27zM214 282v-27h1v27zM216 282v-19h1v19zM218 282v-27h1v27zM220 282v-25h1v25zM222 282v-48h1v48zM224 282v-27h1v27zM226 282v-27h1v27zM228 282v-15h1v15zM230 282v-27h1v27zM232 282v-27h1v27zM234 282v-27h1v27zM236 282v-27h1v27zM238 282v-27h1v27zM240 282v-27h1v27zM242 282v-23h1v23zM244 282v-18h1v18zM246 282v-27h1v27zM248 282v-27h1v27zM250 282v-27h1v27zM252 282v-27h1v27zM254 282v-43h1v43zM256 282v-27h1v27zM258 282v-48h1v48zM260 282v-27h1v27zM262 282v-27h1v27zM264 282v-27h1v27zM265 282v-27h1v27zM266 282v-19h1v19zM268 282v-27h1v27zM270 282v-27h1v27zM272 282v-59h1v59zM273 282v-27h1v27zM274 282v-27h1v27zM276 282v-27h1v27zM277 282v-48h1v48zM278 282v-27h1v27zM280 282v-27h1v27zM282 282v-27h1v27zM284 282v-27h1v27zM285 282v-27h1v27zM286 282v-27h1v27zM288 282v-27h1v27zM289 282v-27h1v27zM290 282v-27h1v27zM291 282v-59h1v59zM292 282v-27h1v27zM294 282v-16h1v16zM296 282v-21h1v21zM298 282v-27h1v27zM300 282v-27h1v27zM302 282v-27h1v27zM303 282v-27h1v27zM304 282v-27h1v27zM306 282v-27h1v27zM308 282v-27h1v27zM310 282v-51h1v51zM312 282v-48h1v48zM314 282v-27h1v27zM316 282v-27h1v27zM318 282v-27h1v27zM320 282v-27h1v27zM322 282v-27h1v27zM324 282v-24h1v24zM326 282v-27h1v27zM327 282v-27h1v27zM328 282v-27h1v27zM330 282v-54h1v54zM332 282v-27h1v27zM333 282v-27h1v27zM334 282v-27h1v27zM335 282v-27h1v27zM336 282v-27h1v27zM338 282v-27h1v27zM340 282v-22h1v22zM342 282v-27h1v27zM344 282v-27h1v27zM346 282v-27h1v27zM347 282v-27h1v27zM348 282v-48h1v48zM350 282v-27h1v27zM352 282v-27h1v27zM354 282v-27h1v27zM355 282v-27h1v27zM356 282v-27h1v27z" fill="url(#cyan)" opacity="0.9" shape-rendering="crispEdges"/><rect x="0" y="280.5" width="358" height="1.5" fill="url(#cyan)" opacity="0.85"/><polyline points="0,270 6,270 6,270 12,270 12,270 18,270 18,270 24,270 24,270 30,270 30,270 36,270 36,269 42,269 42,269 48,269 48,269 54,269 54,271 60,271 60,271 66,271 66,271 72,271 72,271 78,271 78,271 84,271 84,268 90,268 90,269 96,269 96,269 102,269 102,269 108,269 108,269 114,269 114,269 120,269 120,269 126,269 126,269 132,269 132,269 138,269 138,269 144,269 144,271 150,271 150,271 156,271 156,271 162,271 162,271 168,271 168,271 174,271 174,271 180,271 180,269 186,269 186,269 192,269 192,269 198,269 198,270 204,270 204,270 210,270 210,270 216,270 216,270 222,270 222,270 228,270 228,270 234,270 234,270 240,270 240,270 246,270 246,270 252,270 252,270 258,270 258,270 264,270 264,270 270,270 270,270 276,270 276,270 282,270 282,270 288,270 288,270 294,270 294,269 300,269 300,269 306,269 306,270 312,270 312,270 318,270 318,270 324,270 324,270 330,270 330,270 336,270 336,270 342,270 342,270 348,270 348,270 354,270 354,270 360,270" fill="none" stroke="#e0a040" stroke-width="1"/><rect x="0" y="282" width="358" height="1" fill="#4b5866" /><rect x="0" y="283" width="358" height="13.5" fill="url(#pbg)" /><rect x="0" y="283" width="60" height="13.5" fill="url(#blobL)"/><rect x="298" y="283" width="60" height="13.5" fill="url(#blobR)"/><rect x="0" y="283" width="358" height="1.5" fill="url(#sep)" /><rect x="0" y="296.5" width="358" height="1.0" fill="#050505" /><rect x="0" y="282.5" width="1.5" height="5.5" fill="#d8a0f0" /><text x="167.4" y="295.3" font-size="13" textLength="24.5" lengthAdjust="spacingAndGlyphs" fill="#f0f0f0" font-weight="normal" filter="url(#sh)">Proc</text><rect x="0" y="297.5" width="358" height="48.0" fill="url(#cbg)" /><rect x="0" y="305" width="358" height="1" fill="#0c0e10" shape-rendering="crispEdges"/><rect x="0" y="306" width="358" height="1" fill="#4e5964" shape-rendering="crispEdges"/><rect x="0" y="312" width="358" height="1" fill="#0c0e10" shape-rendering="crispEdges"/><rect x="0" y="313" width="358" height="1" fill="#4e5964" shape-rendering="crispEdges"/><rect x="0" y="320" width="358" height="1" fill="#0c0e10" shape-rendering="crispEdges"/><rect x="0" y="321" width="358" height="1" fill="#4e5964" shape-rendering="crispEdges"/><rect x="0" y="328" width="358" height="1" fill="#0c0e10" shape-rendering="crispEdges"/><rect x="0" y="329" width="358" height="1" fill="#4e5964" shape-rendering="crispEdges"/><rect x="0" y="336" width="358" height="1" fill="#0c0e10" shape-rendering="crispEdges"/><rect x="0" y="337" width="358" height="1" fill="#4e5964" shape-rendering="crispEdges"/><path d="M0 297.5v14h1v-14zM2 297.5v2h1v-2zM4 297.5v1h1v-1zM5 297.5v2h1v-2zM6 297.5v2h1v-2zM9 297.5v2h1v-2zM10 297.5v2h1v-2zM11 297.5v2h1v-2zM13 297.5v2h1v-2zM19 297.5v1h1v-1zM23 297.5v2h1v-2zM26 297.5v1h1v-1zM28 297.5v1h1v-1zM30 297.5v1h1v-1zM35 297.5v1h1v-1zM36 297.5v2h1v-2zM42 297.5v2h1v-2zM45 297.5v1h1v-1zM49 297.5v1h1v-1zM50 297.5v1h1v-1zM53 297.5v1h1v-1zM55 297.5v2h1v-2zM58 297.5v1h1v-1zM61 297.5v2h1v-2zM63 297.5v1h1v-1zM66 297.5v1h1v-1zM67 297.5v2h1v-2zM68 297.5v2h1v-2zM70 297.5v2h1v-2zM74 297.5v1h1v-1zM83 297.5v2h1v-2zM87 297.5v2h1v-2zM88 297.5v2h1v-2zM90 297.5v2h1v-2zM94 297.5v1h1v-1zM97 297.5v1h1v-1zM98 297.5v2h1v-2zM100 297.5v1h1v-1zM105 297.5v2h1v-2zM106 297.5v2h1v-2zM111 297.5v2h1v-2zM113 297.5v28h1v-28zM116 297.5v1h1v-1zM118 297.5v1h1v-1zM119 297.5v1h1v-1zM122 297.5v33h1v-33zM124 297.5v8h1v-8zM125 297.5v1h1v-1zM126 297.5v2h1v-2zM128 297.5v2h1v-2zM131 297.5v1h1v-1zM133 297.5v2h1v-2zM134 297.5v2h1v-2zM139 297.5v1h1v-1zM140 297.5v1h1v-1zM143 297.5v1h1v-1zM147 297.5v2h1v-2zM151 297.5v2h1v-2zM156 297.5v6h1v-6zM157 297.5v1h1v-1zM166 297.5v1h1v-1zM168 297.5v2h1v-2zM169 297.5v1h1v-1zM171 297.5v1h1v-1zM173 297.5v2h1v-2zM174 297.5v2h1v-2zM178 297.5v2h1v-2zM186 297.5v1h1v-1zM190 297.5v4h1v-4zM200 297.5v2h1v-2zM202 297.5v2h1v-2zM204 297.5v2h1v-2zM206 297.5v1h1v-1zM208 297.5v1h1v-1zM211 297.5v2h1v-2zM218 297.5v1h1v-1zM221 297.5v2h1v-2zM222 297.5v1h1v-1zM224 297.5v1h1v-1zM226 297.5v2h1v-2zM227 297.5v2h1v-2zM229 297.5v1h1v-1zM230 297.5v1h1v-1zM235 297.5v2h1v-2zM237 297.5v2h1v-2zM239 297.5v2h1v-2zM242 297.5v2h1v-2zM243 297.5v1h1v-1zM245 297.5v2h1v-2zM246 297.5v1h1v-1zM255 297.5v2h1v-2zM260 297.5v1h1v-1zM264 297.5v2h1v-2zM265 297.5v2h1v-2zM267 297.5v2h1v-2zM269 297.5v1h1v-1zM273 297.5v1h1v-1zM274 297.5v2h1v-2zM275 297.5v2h1v-2zM276 297.5v2h1v-2zM278 297.5v2h1v-2zM283 297.5v1h1v-1zM284 297.5v7h1v-7zM287 297.5v1h1v-1zM292 297.5v2h1v-2zM296 297.5v1h1v-1zM297 297.5v2h1v-2zM299 297.5v2h1v-2zM305 297.5v2h1v-2zM307 297.5v1h1v-1zM309 297.5v1h1v-1zM311 297.5v1h1v-1zM313 297.5v2h1v-2zM317 297.5v2h1v-2zM324 297.5v2h1v-2zM336 297.5v1h1v-1zM341 297.5v1h1v-1zM343 297.5v44h1v-44zM345 297.5v29h1v-29zM349 297.5v1h1v-1z" fill="url(#cyan)" opacity="0.92" shape-rendering="crispEdges"/><rect x="0" y="345.5" width="358" height="1.0" fill="#000" /><rect x="0" y="346.5" width="358" height="2.0" fill="url(#sep)" /><rect x="0" y="348.5" width="358" height="1.0" fill="#000" /><rect x="0" y="349.5" width="358" height="1.0" fill="#46515b" /><rect x="0" y="350.5" width="358" height="46.0" fill="url(#cbg)" /><rect x="0" y="355" width="358" height="1" fill="#0c0e10" shape-rendering="crispEdges"/><rect x="0" y="356" width="358" height="1" fill="#4e5964" shape-rendering="crispEdges"/><rect x="0" y="363" width="358" height="1" fill="#0c0e10" shape-rendering="crispEdges"/><rect x="0" y="364" width="358" height="1" fill="#4e5964" shape-rendering="crispEdges"/><rect x="0" y="371" width="358" height="1" fill="#0c0e10" shape-rendering="crispEdges"/><rect x="0" y="372" width="358" height="1" fill="#4e5964" shape-rendering="crispEdges"/><rect x="0" y="378" width="358" height="1" fill="#0c0e10" shape-rendering="crispEdges"/><rect x="0" y="379" width="358" height="1" fill="#4e5964" shape-rendering="crispEdges"/><rect x="0" y="386" width="358" height="1" fill="#0c0e10" shape-rendering="crispEdges"/><rect x="0" y="387" width="358" height="1" fill="#4e5964" shape-rendering="crispEdges"/><path d="M0 396.5v-7h1v7zM3 396.5v-8h1v8zM4 396.5v-3h1v3zM5 396.5v-29h1v29zM7 396.5v-10h1v10zM8 396.5v-1h1v1zM9 396.5v-3h1v3zM10 396.5v-40h1v40zM11 396.5v-2h1v2zM14 396.5v-6h1v6zM15 396.5v-14h1v14zM17 396.5v-3h1v3zM19 396.5v-15h1v15zM20 396.5v-17h1v17zM22 396.5v-6h1v6zM24 396.5v-1h1v1zM26 396.5v-9h1v9zM27 396.5v-3h1v3zM28 396.5v-1h1v1zM29 396.5v-16h1v16zM31 396.5v-2h1v2zM33 396.5v-6h1v6zM34 396.5v-3h1v3zM35 396.5v-20h1v20zM36 396.5v-11h1v11zM37 396.5v-2h1v2zM39 396.5v-1h1v1zM40 396.5v-13h1v13zM42 396.5v-3h1v3zM43 396.5v-2h1v2zM44 396.5v-9h1v9zM48 396.5v-17h1v17zM49 396.5v-3h1v3zM50 396.5v-22h1v22zM52 396.5v-8h1v8zM55 396.5v-24h1v24zM57 396.5v-1h1v1zM59 396.5v-18h1v18zM61 396.5v-3h1v3zM62 396.5v-17h1v17zM63 396.5v-1h1v1zM64 396.5v-1h1v1zM66 396.5v-36h1v36zM67 396.5v-13h1v13zM68 396.5v-1h1v1zM69 396.5v-3h1v3zM70 396.5v-20h1v20zM71 396.5v-1h1v1zM73 396.5v-3h1v3zM75 396.5v-7h1v7zM76 396.5v-18h1v18zM78 396.5v-15h1v15zM79 396.5v-3h1v3zM80 396.5v-2h1v2zM81 396.5v-3h1v3zM82 396.5v-13h1v13zM83 396.5v-3h1v3zM85 396.5v-6h1v6zM86 396.5v-1h1v1zM87 396.5v-2h1v2zM88 396.5v-14h1v14zM91 396.5v-3h1v3zM92 396.5v-2h1v2zM93 396.5v-7h1v7zM95 396.5v-3h1v3zM97 396.5v-16h1v16zM100 396.5v-3h1v3zM102 396.5v-8h1v8zM105 396.5v-3h1v3zM106 396.5v-15h1v15zM108 396.5v-3h1v3zM110 396.5v-7h1v7zM111 396.5v-37h1v37zM112 396.5v-3h1v3zM113 396.5v-3h1v3zM114 396.5v-17h1v17zM116 396.5v-2h1v2zM117 396.5v-22h1v22zM119 396.5v-17h1v17zM121 396.5v-1h1v1zM122 396.5v-11h1v11zM124 396.5v-2h1v2zM125 396.5v-16h1v16zM126 396.5v-18h1v18zM128 396.5v-11h1v11zM129 396.5v-2h1v2zM130 396.5v-2h1v2zM131 396.5v-18h1v18zM132 396.5v-3h1v3zM134 396.5v-2h1v2zM136 396.5v-19h1v19zM137 396.5v-1h1v1zM140 396.5v-10h1v10zM141 396.5v-1h1v1zM142 396.5v-1h1v1zM143 396.5v-10h1v10zM144 396.5v-2h1v2zM145 396.5v-1h1v1zM146 396.5v-18h1v18zM149 396.5v-7h1v7zM152 396.5v-13h1v13zM154 396.5v-1h1v1zM155 396.5v-3h1v3zM156 396.5v-17h1v17zM157 396.5v-1h1v1zM159 396.5v-2h1v2zM161 396.5v-7h1v7zM162 396.5v-1h1v1zM163 396.5v-1h1v1zM165 396.5v-13h1v13zM167 396.5v-3h1v3zM168 396.5v-8h1v8zM170 396.5v-3h1v3zM171 396.5v-3h1v3zM173 396.5v-14h1v14zM176 396.5v-14h1v14zM178 396.5v-3h1v3zM179 396.5v-2h1v2zM180 396.5v-11h1v11zM182 396.5v-2h1v2zM183 396.5v-10h1v10zM184 396.5v-2h1v2zM185 396.5v-3h1v3zM187 396.5v-14h1v14zM190 396.5v-8h1v8zM193 396.5v-17h1v17zM196 396.5v-1h1v1zM198 396.5v-14h1v14zM201 396.5v-20h1v20zM203 396.5v-2h1v2zM204 396.5v-6h1v6zM206 396.5v-1h1v1zM207 396.5v-6h1v6zM208 396.5v-3h1v3zM211 396.5v-18h1v18zM214 396.5v-2h1v2zM216 396.5v-15h1v15zM217 396.5v-3h1v3zM218 396.5v-2h1v2zM219 396.5v-17h1v17zM220 396.5v-2h1v2zM221 396.5v-36h1v36zM223 396.5v-1h1v1zM224 396.5v-9h1v9zM225 396.5v-1h1v1zM226 396.5v-3h1v3zM227 396.5v-18h1v18zM229 396.5v-2h1v2zM230 396.5v-8h1v8zM232 396.5v-1h1v1zM233 396.5v-2h1v2zM234 396.5v-6h1v6zM235 396.5v-2h1v2zM236 396.5v-24h1v24zM238 396.5v-12h1v12zM241 396.5v-3h1v3zM243 396.5v-14h1v14zM244 396.5v-1h1v1zM246 396.5v-22h1v22zM250 396.5v-2h1v2zM251 396.5v-20h1v20zM254 396.5v-7h1v7zM256 396.5v-34h1v34zM259 396.5v-15h1v15zM261 396.5v-16h1v16zM262 396.5v-9h1v9zM265 396.5v-15h1v15zM266 396.5v-1h1v1zM267 396.5v-3h1v3zM268 396.5v-1h1v1zM270 396.5v-17h1v17zM271 396.5v-3h1v3zM273 396.5v-19h1v19zM274 396.5v-3h1v3zM275 396.5v-2h1v2zM276 396.5v-7h1v7zM279 396.5v-2h1v2zM281 396.5v-11h1v11zM282 396.5v-1h1v1zM283 396.5v-1h1v1zM284 396.5v-6h1v6zM286 396.5v-22h1v22zM287 396.5v-15h1v15zM288 396.5v-3h1v3zM291 396.5v-1h1v1zM292 396.5v-8h1v8zM293 396.5v-2h1v2zM296 396.5v-24h1v24zM297 396.5v-3h1v3zM299 396.5v-18h1v18zM301 396.5v-2h1v2zM302 396.5v-1h1v1zM303 396.5v-15h1v15zM304 396.5v-3h1v3zM306 396.5v-6h1v6zM307 396.5v-39h1v39zM309 396.5v-3h1v3zM310 396.5v-20h1v20zM312 396.5v-3h1v3zM313 396.5v-2h1v2zM314 396.5v-18h1v18zM316 396.5v-18h1v18zM318 396.5v-6h1v6zM320 396.5v-1h1v1zM321 396.5v-18h1v18zM322 396.5v-3h1v3zM323 396.5v-1h1v1zM324 396.5v-8h1v8zM326 396.5v-2h1v2zM327 396.5v-3h1v3zM329 396.5v-14h1v14zM331 396.5v-22h1v22zM332 396.5v-1h1v1zM334 396.5v-8h1v8zM335 396.5v-3h1v3zM336 396.5v-3h1v3zM337 396.5v-18h1v18zM339 396.5v-1h1v1zM340 396.5v-2h1v2zM341 396.5v-18h1v18zM342 396.5v-2h1v2zM344 396.5v-9h1v9zM345 396.5v-3h1v3zM346 396.5v-20h1v20zM347 396.5v-20h1v20zM350 396.5v-16h1v16zM352 396.5v-20h1v20zM354 396.5v-17h1v17zM357 396.5v-6h1v6z" fill="url(#org)" opacity="0.95" shape-rendering="crispEdges"/><rect x="0" y="396.5" width="358" height="3.0" fill="#5a6669" /><rect x="0" y="397" width="358" height="1.5" fill="url(#sep)" /><rect x="0" y="399.5" width="358" height="15.699999999999989" fill="url(#pbg)" /><rect x="0" y="399.5" width="60" height="15.699999999999989" fill="url(#blobL)"/><rect x="298" y="399.5" width="60" height="15.699999999999989" fill="url(#blobR)"/><rect x="0" y="402" width="6" height="10" fill="#111" opacity="0.8"/><rect x="6" y="401" width="6" height="10" fill="#333" opacity="0.5"/><rect x="352" y="402" width="6" height="10" fill="#111" opacity="0.8"/><rect x="346" y="401" width="6" height="10" fill="#333" opacity="0.5"/><rect x="0" y="398.5" width="2" height="6.5" fill="#d8a0f0" /><text x="164" y="412.5" font-size="13.2" textLength="32.599999999999994" lengthAdjust="spacingAndGlyphs" fill="#f0f0f0" font-weight="normal" filter="url(#sh)">Schijf</text><rect x="0" y="415.2" width="358" height="0.8000000000000114" fill="#050505" /><rect x="0" y="416" width="358" height="98" fill="url(#cbg)" /><text x="2.3999999999999986" y="426" font-size="11.5" textLength="6.600000000000001" lengthAdjust="spacingAndGlyphs" fill="#f0c890" font-weight="normal" >0</text><rect x="0" y="448" width="358" height="1" fill="#0c0e10" shape-rendering="crispEdges"/><rect x="0" y="449" width="358" height="1" fill="#4e5964" shape-rendering="crispEdges"/><rect x="0" y="480" width="358" height="1" fill="#0c0e10" shape-rendering="crispEdges"/><rect x="0" y="481" width="358" height="1" fill="#4e5964" shape-rendering="crispEdges"/><path d="M14 513v-32h1v32zM15 513v-18h1v18zM30 513v-41h1v41zM31 513v-23h1v23zM53 513v-41h1v41zM54 513v-23h1v23zM73 513v-32h1v32zM74 513v-17h1v17zM94 513v-39h1v39zM95 513v-21h1v21zM116 513v-41h1v41zM117 513v-23h1v23zM137 513v-41h1v41zM138 513v-23h1v23zM158 513v-32h1v32zM159 513v-17h1v17zM180 513v-41h1v41zM181 513v-23h1v23zM201 513v-37h1v37zM202 513v-20h1v20zM222 513v-33h1v33zM223 513v-18h1v18zM244 513v-49h1v49zM245 513v-27h1v27zM265 513v-28h1v28zM266 513v-15h1v15zM286 513v-44h1v44zM287 513v-24h1v24zM308 513v-36h1v36zM309 513v-20h1v20zM351 513v-44h1v44zM352 513v-24h1v24z" fill="url(#cyan)" opacity="0.95" shape-rendering="crispEdges"/><path d="M326 512 L327 506 L328.5 502 L329.5 479 L331 494 L332.5 462 L333.5 444 L335 441 L336 462 L337 504 L338 510 L340 512" fill="none" stroke="#20b8c0" stroke-width="1.2"/><path d="M332 512 L332.5 504 L334 484 L335 504 L336 512" fill="none" stroke="#20b8c0" stroke-width="1"/><rect x="0" y="512" width="358" height="1" fill="#20c0c0" /><rect x="0" y="513" width="358" height="1" fill="#0a0a0a" /><rect x="0" y="514" width="358" height="3" fill="url(#sep)" /><rect x="0" y="517" width="358" height="12.299999999999955" fill="url(#pbg)" /><rect x="0" y="517" width="60" height="12.299999999999955" fill="url(#blobL)"/><rect x="298" y="517" width="60" height="12.299999999999955" fill="url(#blobR)"/><rect x="3" y="520" width="12" height="4" fill="#333" opacity="0.7"/><rect x="343" y="520" width="12" height="4" fill="#333" opacity="0.7"/><rect x="0" y="514" width="2" height="6" fill="#d8a0f0" /><text x="166" y="527.1" font-size="13.2" textLength="26.5" lengthAdjust="spacingAndGlyphs" fill="#f0f0f0" font-weight="normal" filter="url(#sh)">em0</text><rect x="0" y="529.3" width="358" height="1.0" fill="#050505" /><rect x="0" y="530.3" width="358" height="47.200000000000045" fill="url(#cbg)" /><text x="2.3999999999999986" y="540" font-size="11.5" textLength="6.5" lengthAdjust="spacingAndGlyphs" fill="#f0c890" font-weight="normal" >0</text><path d="M0 577.5v-26h1v26zM14 577.5v-6h1v6zM24 577.5v-6h1v6zM43 577.5v-8h1v8zM48 577.5v-9h1v9zM51 577.5v-12h1v12zM56 577.5v-12h1v12zM61 577.5v-16h1v16zM89 577.5v-8h1v8zM93 577.5v-8h1v8zM101 577.5v-6h1v6zM106 577.5v-8h1v8zM108 577.5v-12h1v12zM111 577.5v-12h1v12zM144 577.5v-11h1v11zM145 577.5v-40h1v40zM147 577.5v-10h1v10zM157 577.5v-8h1v8zM210 577.5v-12h1v12zM216 577.5v-12h1v12zM218 577.5v-20h1v20zM222 577.5v-8h1v8zM224 577.5v-18h1v18zM270 577.5v-6h1v6zM273 577.5v-6h1v6zM281 577.5v-14h1v14zM282 577.5v-20h1v20zM287 577.5v-8h1v8zM288 577.5v-10h1v10zM329 577.5v-10h1v10zM331 577.5v-8h1v8zM333 577.5v-8h1v8zM343 577.5v-12h1v12zM345 577.5v-38h1v38zM347 577.5v-22h1v22zM350 577.5v-8h1v8z" fill="url(#cyan)" opacity="1" shape-rendering="crispEdges"/><path d="M0 577.5v-11h1v11zM14 577.5v-2h1v2zM24 577.5v-3h1v3zM43 577.5v-2h1v2zM48 577.5v-2h1v2zM51 577.5v-4h1v4zM56 577.5v-4h1v4zM61 577.5v-8h1v8zM89 577.5v-4h1v4zM93 577.5v-4h1v4zM101 577.5v-2h1v2zM106 577.5v-4h1v4zM108 577.5v-6h1v6zM111 577.5v-6h1v6zM144 577.5v-4h1v4zM145 577.5v-18h1v18zM147 577.5v-4h1v4zM157 577.5v-2h1v2zM210 577.5v-4h1v4zM216 577.5v-2h1v2zM218 577.5v-8h1v8zM222 577.5v-4h1v4zM224 577.5v-8h1v8zM270 577.5v-4h1v4zM273 577.5v-4h1v4zM281 577.5v-8h1v8zM282 577.5v-8h1v8zM287 577.5v-6h1v6zM288 577.5v-6h1v6zM329 577.5v-6h1v6zM331 577.5v-4h1v4zM333 577.5v-6h1v6zM343 577.5v-4h1v4zM345 577.5v-18h1v18zM347 577.5v-12h1v12zM350 577.5v-4h1v4z" fill="#e09a40" opacity="1" shape-rendering="crispEdges"/><rect x="0" y="577.5" width="358" height="1.0" fill="#0a0a0a" /><rect x="0" y="578.5" width="358" height="2.0" fill="url(#sep)" /><rect x="0" y="580.5" width="358" height="12.799999999999955" fill="url(#pbg)" /><rect x="0" y="580.5" width="60" height="12.799999999999955" fill="url(#blobL)"/><rect x="298" y="580.5" width="60" height="12.799999999999955" fill="url(#blobR)"/><rect x="0" y="580" width="2" height="6" fill="#d8a0f0" /><text x="172" y="592" font-size="13" textLength="15.800000000000011" lengthAdjust="spacingAndGlyphs" fill="#f0f0f0" font-weight="normal" filter="url(#sh)">lo0</text><rect x="0" y="593.3" width="358" height="1.7000000000000455" fill="url(#sep)" /><rect x="0" y="595" width="358" height="12.5" fill="url(#pbg)" /><rect x="0" y="595" width="60" height="12.5" fill="url(#blobL)"/><rect x="298" y="595" width="60" height="12.5" fill="url(#blobR)"/><rect x="0" y="595" width="2" height="5" fill="#d8a0f0" /><text x="166.6" y="606.2" font-size="13" textLength="26.400000000000006" lengthAdjust="spacingAndGlyphs" fill="#f0f0f0" font-weight="normal" filter="url(#sh)">tun0</text><rect x="0" y="607.5" width="358" height="17.5" fill="#6e7678" /><rect x="0" y="624" width="358" height="1" fill="#4a5254" /><rect x="1.8999999999999986" y="609.4" width="59.800000000000004" height="13.5" fill="#7c8a8c" stroke="#5a6466" stroke-width="0.8"/><text x="19.400000000000006" y="620.6" font-size="13.2" textLength="23.19999999999999" lengthAdjust="spacingAndGlyphs" fill="#e8e8e8" font-weight="normal" filter="url(#sh)">0:00</text><text x="48" y="620.6" font-size="11" textLength="12.799999999999997" lengthAdjust="spacingAndGlyphs" fill="#e8e8e8" font-weight="normal" filter="url(#sh)">00</text><rect x="344" y="612" width="12" height="7" fill="#a8a0c0" stroke="#ccc" stroke-width="0.6"/><rect x="346" y="614.5" width="8" height="2.0" fill="#c090e0" /><rect x="0" y="625" width="358" height="34" fill="url(#pbg)" /><rect x="1.5" y="626.5" width="355.0" height="31.5" fill="none" stroke="#4a5456" stroke-width="1"/><text x="164.7" y="637.5" font-size="13" textLength="29.100000000000023" lengthAdjust="spacingAndGlyphs" fill="#eaeaea" font-weight="normal" filter="url(#sh)">Mem</text><text x="163.3" y="653.3" font-size="13" textLength="31.899999999999977" lengthAdjust="spacingAndGlyphs" fill="#eaeaea" font-weight="normal" filter="url(#sh)">Swap</text><rect x="24.400000000000006" y="640.5" width="53.39999999999999" height="1.5" fill="#2a3032" /><rect x="77.8" y="640.5" width="47.000000000000014" height="1.5" fill="#c8cccc" /><rect x="124.80000000000001" y="640.5" width="55.19999999999999" height="1.5" fill="#2a3032" /><rect x="180" y="640.5" width="54" height="1.5" fill="#c8cccc" /><rect x="234" y="640.5" width="47" height="1.5" fill="#2a3032" /><rect x="281" y="640.5" width="53" height="1.5" fill="#c8cccc" /><path d="M244 625.8h6M247 625.8v10" stroke="#fff" stroke-width="1.7"/><path d="M20 646v10M16.700000000000003 655.5h6.5" stroke="#fff" stroke-width="1.7"/><rect x="0" y="657" width="358" height="2" fill="#5e6668" /><rect x="0" y="659" width="358" height="15" fill="url(#pbg)" /><rect x="1.5" y="660" width="355.0" height="13.5" fill="none" stroke="#4a5456" stroke-width="1"/><rect x="3" y="662" width="20.5" height="10" fill="#d8d8c0" stroke="#333" stroke-width="0.8"/><path d="M3 662.5 Q13 670 23.5 662.5" fill="#fafaf0" stroke="#222" stroke-width="1"/><text x="244.3" y="670.2" font-size="12" textLength="13.0" lengthAdjust="spacingAndGlyphs" fill="#e8e8e8" font-weight="normal" filter="url(#sh)">-/-</text><rect x="0" y="674" width="358" height="14" fill="url(#pbg)" /><text x="154.3" y="686" font-size="13.3" textLength="48.29999999999998" lengthAdjust="spacingAndGlyphs" fill="#efe6cc" font-weight="normal" filter="url(#sh)">0d 22:31</text></svg></div></div><div class="win" style="left:411px;top:6px;width:417px;height:819px"><div class="tb"></div><div class="tt" style="left:28px;width:312px;right:auto;">MYCONKY</div><svg class="abs" style="left:7px;top:4px" width="17" height="17" viewBox="0 0 17 17"><path d="M5.5 2 L9 2.3 L15.5 12 L15.5 15.6 L5.5 15.6 Z" fill="#f4f4f4" stroke="#8a8a8a" stroke-width="0.6"/><path d="M6 3 L8.6 3.2 L9.6 5.4 L6 6.4Z" fill="#fca84a"/><path d="M6 6.4 L9.6 5.4 L10.6 7.6 L6 9.4Z" fill="#f07818"/><path d="M7 9.6 L10.8 7.9 L12.2 10.2 L8.2 12.4Z" fill="#6a3a8a"/><path d="M10.2 6.2 L12.4 9.6 L11.2 10.4 L9.6 7.2Z" fill="#b070c8"/><path d="M11.6 8 L14.2 11.8 L12.6 12.6 L11 9Z" fill="#d0b0e0"/><rect x="7.5" y="12.5" width="2" height="3" fill="#1a4a9a"/><rect x="10.2" y="12" width="2.2" height="3.6" fill="#2a5ab8"/><rect x="13" y="12.4" width="2" height="3.2" fill="#6aa0e0"/><rect x="1" y="1" width="5" height="15" rx="1.6" fill="#fbfbfb" stroke="#5a5a5a" stroke-width="0.9"/><ellipse cx="3.5" cy="3.2" rx="2" ry="1" fill="#f8e040"/><ellipse cx="3.5" cy="6.2" rx="2" ry="1.1" fill="#e8c400"/><ellipse cx="3.5" cy="9.2" rx="2" ry="1.1" fill="#c89a00"/><circle cx="3.5" cy="13.2" r="0.6" fill="#999"/><rect x="1.5" y="15.6" width="14.5" height="1" fill="#3a3a3a"/></svg><div class="btn" style="left:342px;top:2px"><svg width="18" height="18"><rect x="4" y="12" width="10" height="2" fill="#686868"/></svg></div><div class="btn" style="left:366px;top:2px"><svg width="18" height="18"><rect x="4.65" y="4.65" width="8.7" height="8.7" fill="none" stroke="#686868" stroke-width="1.3"/><rect x="4" y="4" width="10" height="2.2" fill="#686868"/></svg></div><div class="btn" style="left:390px;top:2px"><svg width="18" height="18"><path d="M5 4.6 L13.8 13.6 M13.8 4.6 L5 13.6" stroke="#686868" stroke-width="2.3" stroke-linecap="round"/></svg></div><div class="abs" style="left:3px;top:25px;width:409px;height:789px;border:2px solid #ffff00;background:#030304"></div><div class="abs mono cl" style="left:8.5px;top:32.7px"><span style="color:#ffff00">myfreebsd - FreeBSD 15.0-RELEASE-p4 on amd64</span></div><div class="abs mono cl" style="left:8.5px;top:53.7px"><span style="color:#00ff00">vrijdag 2026-04-03 17:26:46</span></div><div class="abs" style="left:9px;top:84.7px;width:397px;height:1px;background:#ffff00"></div><div class="abs mono cl" style="left:8.5px;top:116.7px"><span style="color:#ffff00">      April 2026</span></div><div class="abs mono cl" style="left:8.5px;top:137.7px"><span style="color:#ffff00"> Su Mo Tu We Th Fr Sa</span></div><div class="abs mono cl" style="left:8.5px;top:158.7px"><span style="color:#ffff00">           1  2&lt; 3&gt; 4</span></div><div class="abs mono cl" style="left:8.5px;top:179.7px"><span style="color:#ffff00">  5  6  7  8  9 10 11</span></div><div class="abs mono cl" style="left:8.5px;top:200.7px"><span style="color:#ffff00"> 12 13 14 15 16 17 18</span></div><div class="abs mono cl" style="left:8.5px;top:221.7px"><span style="color:#ffff00"> 19 20 21 22 23 24 25</span></div><div class="abs mono cl" style="left:8.5px;top:242.7px"><span style="color:#ffff00"> 26 27 28 29 30</span></div><div class="abs" style="left:9px;top:294.7px;width:397px;height:1px;background:#ffff00"></div><div class="abs mono cl" style="left:8.5px;top:305.7px"><span style="color:#ffff00">   Wired:5054M</span></div><div class="abs mono cl" style="left:8.5px;top:326.7px"><span style="color:#ffff00">  Active:2236M</span></div><div class="abs mono cl" style="left:8.5px;top:347.7px"><span style="color:#ffff00"> Laundry:3479M</span></div><div class="abs mono cl" style="left:8.5px;top:368.7px"><span style="color:#ffff00">Inactive:3967M</span></div><div class="abs mono cl" style="left:8.5px;top:389.7px"><span style="color:#ffff00">   Cache:0000M</span></div><div class="abs mono cl" style="left:8.5px;top:410.7px"><span style="color:#ffff00">    Free:0939M</span></div><div class="abs mono cl" style="left:8.5px;top:431.7px"><span style="color:#ffff00">     Gap:0000M</span></div><div class="abs mono cl" style="left:8.5px;top:452.7px"><span style="color:#ffff00">--------------</span></div><div class="abs mono cl" style="left:8.5px;top:473.7px"><span style="color:#ffff00">   Total:15750M</span></div><div class="abs" style="left:9px;top:504.7px;width:397px;height:1px;background:#ffff00"></div><div class="abs mono cl" style="left:8.5px;top:515.7px"><span style="color:#ffff00">COMMAND            PID         SIZE</span></div><div class="abs mono cl" style="left:8.5px;top:536.7px"><span style="color:#ffff00">Xorg              9229          24G</span></div><div class="abs mono cl" style="left:8.5px;top:557.7px"><span style="color:#ffff00">firefox          67031          13G</span></div><div class="abs mono cl" style="left:8.5px;top:578.7px"><span style="color:#ffff00">firefox          32211          11G</span></div><div class="abs mono cl" style="left:8.5px;top:599.7px"><span style="color:#ffff00">firefox           9643        5137M</span></div><div class="abs mono cl" style="left:8.5px;top:620.7px"><span style="color:#ffff00">firefox          71804        2661M</span></div><div class="abs" style="left:9px;top:651.7px;width:397px;height:1px;background:#ffff00"></div><div class="abs mono cl" style="left:8.5px;top:662.7px"><span style="color:#dcdcdc">Name              PID   CPU%</span></div><div class="abs mono cl" style="left:8.5px;top:683.7px"><span style="color:#dcdcdc">CPU:</span></div><div class="abs mono cl" style="left:8.5px;top:704.7px"><span style="color:#ffff00"> c++                26001  10,94</span></div><div class="abs mono cl" style="left:8.5px;top:725.7px"><span style="color:#ffff00"> mate-panel         22578   4,83</span></div><div class="abs mono cl" style="left:8.5px;top:746.7px"><span style="color:#ffff00"> firefox            67031   4,54</span></div><div class="abs mono cl" style="left:8.5px;top:767.7px"><span style="color:#ffff00"> firefox            32211   3,47</span></div><div class="abs mono cl" style="left:8.5px;top:788.7px"><span style="color:#ffff00"> Xorg                9229   2,69</span></div></div><div class="win" style="left:834px;top:11px;width:417px;height:882px"><div class="tb"></div><div class="tt" style="left:28px;width:312px;right:auto;">MYCONKY</div><svg class="abs" style="left:7px;top:4px" width="17" height="17" viewBox="0 0 17 17"><path d="M5.5 2 L9 2.3 L15.5 12 L15.5 15.6 L5.5 15.6 Z" fill="#f4f4f4" stroke="#8a8a8a" stroke-width="0.6"/><path d="M6 3 L8.6 3.2 L9.6 5.4 L6 6.4Z" fill="#fca84a"/><path d="M6 6.4 L9.6 5.4 L10.6 7.6 L6 9.4Z" fill="#f07818"/><path d="M7 9.6 L10.8 7.9 L12.2 10.2 L8.2 12.4Z" fill="#6a3a8a"/><path d="M10.2 6.2 L12.4 9.6 L11.2 10.4 L9.6 7.2Z" fill="#b070c8"/><path d="M11.6 8 L14.2 11.8 L12.6 12.6 L11 9Z" fill="#d0b0e0"/><rect x="7.5" y="12.5" width="2" height="3" fill="#1a4a9a"/><rect x="10.2" y="12" width="2.2" height="3.6" fill="#2a5ab8"/><rect x="13" y="12.4" width="2" height="3.2" fill="#6aa0e0"/><rect x="1" y="1" width="5" height="15" rx="1.6" fill="#fbfbfb" stroke="#5a5a5a" stroke-width="0.9"/><ellipse cx="3.5" cy="3.2" rx="2" ry="1" fill="#f8e040"/><ellipse cx="3.5" cy="6.2" rx="2" ry="1.1" fill="#e8c400"/><ellipse cx="3.5" cy="9.2" rx="2" ry="1.1" fill="#c89a00"/><circle cx="3.5" cy="13.2" r="0.6" fill="#999"/><rect x="1.5" y="15.6" width="14.5" height="1" fill="#3a3a3a"/></svg><div class="btn" style="left:342px;top:2px"><svg width="18" height="18"><rect x="4" y="12" width="10" height="2" fill="#686868"/></svg></div><div class="btn" style="left:366px;top:2px"><svg width="18" height="18"><rect x="4.65" y="4.65" width="8.7" height="8.7" fill="none" stroke="#686868" stroke-width="1.3"/><rect x="4" y="4" width="10" height="2.2" fill="#686868"/></svg></div><div class="btn" style="left:390px;top:2px"><svg width="18" height="18"><path d="M5 4.6 L13.8 13.6 M13.8 4.6 L5 13.6" stroke="#686868" stroke-width="2.3" stroke-linecap="round"/></svg></div><div class="abs" style="left:3px;top:25px;width:409px;height:852px;border:2px solid #ffff00;background:#030304"></div><div class="abs mono cl" style="left:8.5px;top:32.8px"><span style="color:#ffff00">myfreebsd - FreeBSD 15.0-RELEASE-p4 on amd64</span></div><div class="abs mono cl" style="left:8.5px;top:53.8px"><span style="color:#00ff00">vrijdag 2026-04-03 17:26:46</span></div><div class="abs" style="left:9px;top:84.8px;width:397px;height:1px;background:#ffff00"></div><div class="abs mono cl" style="left:8.5px;top:95.8px"><span style="color:#dcdcdc">Frequency:  </span><span style="color:#ffff00">3991</span><span style="color:#dcdcdc">  MHz</span></div><div class="abs mono cl" style="left:8.5px;top:116.8px"><span style="color:#00ff00">RAM Usage:</span></div><div class="abs mono cl" style="left:8.5px;top:137.8px"><span style="color:#ffff00">10,6GiB/15,4GiB - 69%</span></div><div class="abs mono cl" style="left:8.5px;top:158.8px"><span style="color:#dcdcdc">MEM FREE:      </span><span style="color:#ffff00">840MiB</span></div><div class="abs mono cl" style="left:8.5px;top:179.8px"><span style="color:#00ff00">Swap Usage:</span></div><div class="abs mono cl" style="left:8.5px;top:200.8px"><span style="color:#ffff00"> 3,50GiB/64,0GiB - 5%</span></div><div class="abs mono cl" style="left:8.5px;top:221.8px"><span style="color:#dcdcdc">SWAP FREE:  </span><span style="color:#ffff00">60,5GiB</span></div><div class="abs mono cl" style="left:8.5px;top:263.8px"><span style="color:#00ff00">CPU Usage:</span></div><div class="abs mono cl" style="left:8.5px;top:284.8px"><span style="color:#ffff00"> 14%</span></div><div class="abs mono cl" style="left:8.5px;top:305.8px"><span style="color:#dcdcdc">Processes:      </span><span style="color:#ffff00">196</span></div><div class="abs" style="left:9px;top:336.8px;width:397px;height:1px;background:#ffff00"></div><div class="abs mono cl" style="left:8.5px;top:347.8px"><span style="color:#dcdcdc">Interrupts (/s) :</span><span style="color:#ffff00">19965.5</span></div><div class="abs mono cl" style="left:8.5px;top:368.8px"><span style="color:#dcdcdc">Diskio  ada0 ada1 ada2 da0 da1 da2 (MB/s) :</span></div><div class="abs mono cl" style="left:8.5px;top:389.8px"><span style="color:#dcdcdc">&gt; </span><span style="color:#ffff00">0.435 0 0 1.215 0 0</span></div><div class="abs" style="left:9px;top:420.8px;width:397px;height:1px;background:#ffff00"></div><div class="abs mono cl" style="left:8.5px;top:431.8px"><span style="color:#00ff00">Used File systems: /</span></div><div class="abs mono cl" style="left:8.5px;top:452.8px"><span style="color:#dcdcdc">1. </span><span style="color:#ffff00">15,9GiB/213GiB</span></div><div class="abs" style="left:9px;top:483.8px;width:397px;height:1px;background:#ffff00"></div><div class="abs mono cl" style="left:8.5px;top:494.8px"><span style="color:#dcdcdc">ZFS ARC (MB):</span></div><div class="abs mono cl" style="left:8.5px;top:515.8px"><span style="color:#00ff00">Size:  </span><span style="color:#ffff00">1715.0</span></div><div class="abs mono cl" style="left:8.5px;top:536.8px"><span style="color:#dcdcdc">Min:   </span><span style="color:#ffff00">1430.5</span></div><div class="abs mono cl" style="left:8.5px;top:557.8px"><span style="color:#dcdcdc">C:     </span><span style="color:#ffff00">1779.8</span></div><div class="abs mono cl" style="left:8.5px;top:578.8px"><span style="color:#dcdcdc">Max:   </span><span style="color:#ffff00">4291.5</span></div><div class="abs" style="left:9px;top:609.8px;width:397px;height:1px;background:#ffff00"></div><div class="abs mono cl" style="left:8.5px;top:620.8px"><span style="color:#dcdcdc">Openports IP4:&gt;       </span><span style="color:#ffff00">84</span></div><div class="abs mono cl" style="left:8.5px;top:641.8px"><span style="color:#dcdcdc">Openports IP6:&gt;       </span><span style="color:#ffff00">30</span></div><div class="abs" style="left:9px;top:672.8px;width:397px;height:1px;background:#ffff00"></div><div class="abs mono cl" style="left:8.5px;top:683.8px"><span style="color:#dcdcdc">Networking em0:</span></div><div class="abs mono cl" style="left:8.5px;top:704.8px"><span style="color:#dcdcdc">UpSpeed  : </span><span style="color:#ffff00">0B/15,3KiB</span></div><div class="abs mono cl" style="left:8.5px;top:725.8px"><span style="color:#dcdcdc">DownSpeed: </span><span style="color:#ffff00">0B/619KiB</span></div><div class="abs mono cl" style="left:8.5px;top:746.8px"><span style="color:#dcdcdc">TotalUp  : </span><span style="color:#ffff00">0B/5,68GiB</span></div><div class="abs mono cl" style="left:8.5px;top:767.8px"><span style="color:#dcdcdc">TotalDown: </span><span style="color:#ffff00">0B/83,5GiB</span></div><div class="abs" style="left:9px;top:798.8px;width:397px;height:1px;background:#ffff00"></div><div class="abs mono cl" style="left:8.5px;top:809.8px"><span style="color:#dcdcdc">Uptime: </span><span style="color:#ffff00">22h 30m 54s</span></div><div class="abs mono cl" style="left:8.5px;top:830.8px"><span style="color:#dcdcdc">LOAD:1m,5m,15m:  </span><span style="color:#ffff00">1,44 1,79 3,30</span></div><div class="abs mono cl" style="left:8.5px;top:851.8px"><span style="color:#dcdcdc">ACPITEMP:  </span><span style="color:#ffff00">27</span><span style="color:#dcdcdc">  degrees</span></div><div class="abs" style="left:207px;top:142px;width:199px;height:5px;border:1px solid #ffff00"><div style="position:absolute;left:0;top:0;bottom:0;width:136px;background:#ffff00"></div></div><div class="abs" style="left:207px;top:205px;width:199px;height:5px;border:1px solid #ffff00"><div style="position:absolute;left:0;top:0;bottom:0;width:10px;background:#ffff00"></div></div><div class="abs" style="left:54px;top:288.5px;width:352px;height:5.0px;border:1px solid #ffff00"><div style="position:absolute;left:0;top:0;bottom:0;width:47.5px;background:#ffff00"></div></div><div class="abs" style="left:171px;top:456.5px;width:235px;height:6.0px;border:1px solid #ffff00"><div style="position:absolute;left:0;top:0;bottom:0;width:17px;background:#ffff00"></div></div></div><div class="win" style="left:1251px;top:15px;width:671px;height:886px"><div class="tb"></div><div class="tt" style="left:23px;width:570px;right:auto;">Terminalvenster -</div><svg class="abs" style="left:7px;top:4px" width="16" height="15" viewBox="0 0 16 15"><rect x="0.5" y="0.5" width="15" height="14" fill="#263640" stroke="#c8ccd0" stroke-width="0.6"/><path d="M3 3.5 L7 6 L3 8.5" fill="none" stroke="#fff" stroke-width="1.5"/><rect x="7.5" y="10" width="5" height="1.6" fill="#fff"/></svg><div class="btn" style="left:598px;top:2px"><svg width="18" height="18"><rect x="4" y="12" width="10" height="2" fill="#686868"/></svg></div><div class="btn" style="left:622px;top:2px"><svg width="18" height="18"><rect x="4.65" y="4.65" width="8.7" height="8.7" fill="none" stroke="#686868" stroke-width="1.3"/><rect x="4" y="4" width="10" height="2.2" fill="#686868"/></svg></div><div class="btn" style="left:645px;top:2px"><svg width="18" height="18"><path d="M5 4.6 L13.8 13.6 M13.8 4.6 L5 13.6" stroke="#686868" stroke-width="2.3" stroke-linecap="round"/></svg></div><div class="abs" style="left:0;top:24px;right:0;height:33px;background:#edebe9"></div><div class="abs menu" style="left:9px;top:32px">Bestand</div><div class="abs menu" style="left:83px;top:32px">Bewerken</div><div class="abs menu" style="left:171.5px;top:32px">Beeld</div><div class="abs menu" style="left:225px;top:32px">Terminalvenster</div><div class="abs menu" style="left:360px;top:32px">Tabbladen</div><div class="abs menu" style="left:451px;top:32px">Hulp</div><div class="abs" style="left:3px;top:57px;width:663px;height:44px;background:#e3e1de"></div><div class="abs tab" style="left:3.5px;top:57px;width:165.0px;height:44px"><span class="tabt" style="top:11.5px">Zonder titel</span><svg class="tabx" width="12" height="12" style="left:136.5px;top:15.299999999999997px"><path d="M1.8 1.8L9.2 9.2M9.2 1.8L1.8 9.2" stroke="#5c5c5c" stroke-width="2.7" stroke-linecap="round"/><path d="M1.8 1.8L9.2 9.2M9.2 1.8L1.8 9.2" stroke="#c4c8c4" stroke-width="0.8" stroke-linecap="round"/></svg></div><div class="abs tab act" style="left:168.5px;top:57px;width:164.5px;height:44px"><span class="tabt" style="top:12.0px">Zonder titel</span><svg class="tabx" width="12" height="12" style="left:136.0px;top:15.299999999999997px"><path d="M1.8 1.8L9.2 9.2M9.2 1.8L1.8 9.2" stroke="#5c5c5c" stroke-width="2.7" stroke-linecap="round"/><path d="M1.8 1.8L9.2 9.2M9.2 1.8L1.8 9.2" stroke="#c4c8c4" stroke-width="0.8" stroke-linecap="round"/></svg></div><div class="abs tab" style="left:333px;top:57px;width:166.5px;height:44px"><span class="tabt" style="top:11.5px">Zonder titel</span><svg class="tabx" width="12" height="12" style="left:138.0px;top:15.299999999999997px"><path d="M1.8 1.8L9.2 9.2M9.2 1.8L1.8 9.2" stroke="#5c5c5c" stroke-width="2.7" stroke-linecap="round"/><path d="M1.8 1.8L9.2 9.2M9.2 1.8L1.8 9.2" stroke="#c4c8c4" stroke-width="0.8" stroke-linecap="round"/></svg></div><div class="abs tab" style="left:499.5px;top:57px;width:166.0px;height:44px"><span class="tabt" style="top:11.5px">Zonder titel</span><svg class="tabx" width="12" height="12" style="left:137.5px;top:15.299999999999997px"><path d="M1.8 1.8L9.2 9.2M9.2 1.8L1.8 9.2" stroke="#5c5c5c" stroke-width="2.7" stroke-linecap="round"/><path d="M1.8 1.8L9.2 9.2M9.2 1.8L1.8 9.2" stroke="#c4c8c4" stroke-width="0.8" stroke-linecap="round"/></svg></div><div class="abs" style="left:3px;top:101px;width:648px;height:780px;background:#000"></div><div class="abs mono tl" style="left:4px;top:103.80000000000001px">dT: 5.000s  w: 5.000s  filter: nda0|ada2</div><div class="abs mono tl" style="left:4px;top:121.80000000000001px"> L(q)  ops/s    r/s   kBps   ms/r    w/s   kBps   ms/w   %busy Name</div><div class="abs mono tl" style="left:4px;top:139.8px">    0      2      1      9  0.242      1     41  0.028<span style="color:#5faf00">    0.0</span>| nda0</div><div class="abs mono tl" style="left:4px;top:157.8px">    0     26      0      0  0.000     21    460  0.123<span style="color:#5faf00">    0.6</span>| ada2</div><div class="abs mono tl" style="left:4px;top:175.8px">    0      0      0      0  0.000      0      0  0.000<span style="color:#5faf00">    0.0</span>| nda0p1</div><div class="abs mono tl" style="left:4px;top:193.8px">    0      0      0      0  0.000      0      0  0.000<span style="color:#5faf00">    0.0</span>| nda0p2</div><div class="abs mono tl" style="left:4px;top:211.8px">    0      1      0      0  0.000      1     41  0.029<span style="color:#5faf00">    0.0</span>| nda0p3</div><div class="abs mono tl" style="left:4px;top:229.8px">    0      1      1      9  0.245      0      0  0.000<span style="color:#5faf00">    0.0</span>| nda0p4</div><div class="abs mono tl" style="left:4px;top:247.8px">    0      2      0      0  0.000      2     89  0.245<span style="color:#5faf00">    0.0</span>| ada2p1</div><div class="abs mono tl" style="left:4px;top:265.8px">    0     24      0      0  0.000     19    371  0.113<span style="color:#5faf00">    0.6</span>| ada2p2</div><div class="abs mono tl" style="left:4px;top:283.8px">    0      0      0      0  0.000      0      0  0.000<span style="color:#5faf00">    0.0</span>| ada2p3</div><div class="abs mono tl" style="left:4px;top:301.8px">    0      0      0      0  0.000      0      0  0.000<span style="color:#5faf00">    0.0</span>| ada2p5</div><div class="abs mono tl" style="left:4px;top:319.8px">    0      0      0      0  0.000      0      0  0.000<span style="color:#5faf00">    0.0</span>| ada2p8</div><div class="abs mono tl" style="left:4px;top:337.8px">    0      0      0      0  0.000      0      0  0.000<span style="color:#5faf00">    0.0</span>| ada2p9</div><div class="abs" style="left:3px;top:353.5px;width:11px;height:19.5px;border:1px solid #f0f0f0"></div><div class="abs" style="left:651px;top:101px;width:15px;height:780px;background:#b4bca2;border-left:1px solid #9aa08a"></div><div class="abs" style="left:651px;top:101px;width:15px;height:19px;background:linear-gradient(#fafaf9,#dedcd8);border-bottom:1px solid #7f8472"><svg width="15" height="18"><path d="M3.5 10.5 L7.5 6 L11.5 10.5Z" fill="#b8b8b8"/></svg></div><div class="abs" style="left:651px;top:861px;width:15px;height:20px;background:linear-gradient(#fafaf9,#dedcd8);border-top:1px solid #7f8472"><svg width="15" height="19"><path d="M3.5 8.5 L7.5 12.5 L11.5 8.5Z" fill="#b8b8b8"/></svg></div></div></body></html>
